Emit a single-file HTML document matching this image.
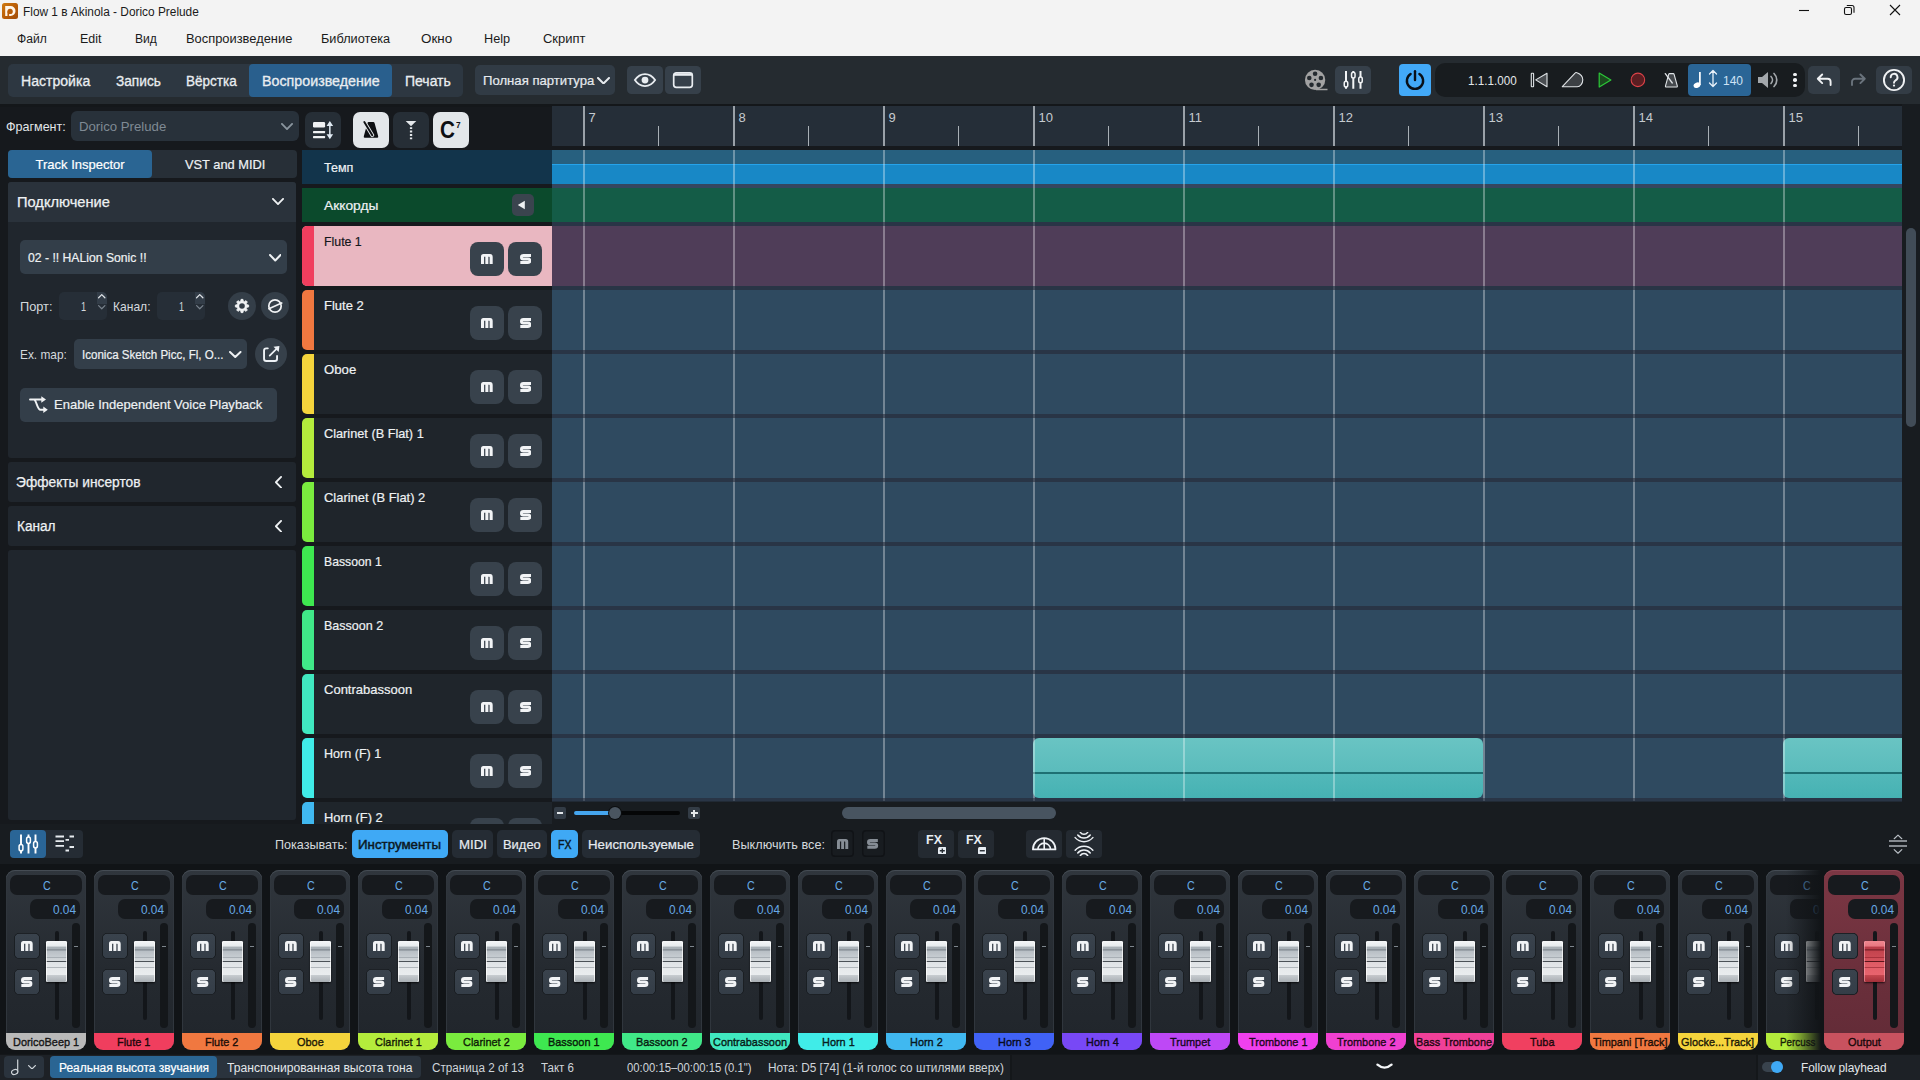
<!DOCTYPE html><html><head><meta charset="utf-8"><title>Dorico</title><style>
*{box-sizing:border-box;margin:0;padding:0}
html,body{width:1920px;height:1080px;overflow:hidden;background:#16191d;font-family:"Liberation Sans",sans-serif;color:#e8ecef;font-size:13px}
.a{position:absolute}
.t{position:absolute;white-space:nowrap;line-height:1;transform-origin:0 0}
.ms{position:absolute;width:34px;height:34px;border-radius:8px;background:#38424c}
.trk{position:absolute;left:302px;width:250px;height:60px;background:#1f252b;border-radius:5px 0 0 5px;overflow:hidden}
.trk i{position:absolute;left:0;top:0;width:12px;height:60px}
.lane{position:absolute;left:552px;width:1350px;height:60px;background:#2f4a60}
.strip{position:absolute;top:870px;width:80px;height:180px;border-radius:9px;background:linear-gradient(#30363d,#252a30 55%,#20252b);overflow:hidden;box-shadow:inset 0 1px 0 #454c54,inset 1px 0 0 #30363d,inset -1px 0 0 #30363d}
.pan{position:absolute;left:4px;top:5px;width:72px;height:20px;border-radius:7px;background:#171a1e}
.val{position:absolute;left:24px;top:29px;width:50px;height:20px;border-radius:7px;background:#171a1e}
.mb{position:absolute;left:7.500px;width:26.800px;height:26.800px;border-radius:5px;background:linear-gradient(#3a434d,#343d47);box-shadow:inset 0 0 0 .800px #14171a}
.ftrk{position:absolute;left:49px;top:61px;width:4px;height:89px;border-radius:2px;background:#13161a}
.fcap{position:absolute;left:40px;top:71px;width:21px;height:41px;border-radius:1.500px;background:linear-gradient(#f4f6f7 0%,#e6eaed 13%,#a9b1b7 14%,#aab2b8 20%,#8b939a 20.5%,#8b939a 23%,#b7bec4 23.5%,#c6ccd1 39%,#a8afb5 39.5%,#a8afb5 41.5%,#cdd2d6 42%,#d3d8db 48.5%,#4b5157 49%,#4b5157 51.5%,#dfe3e6 52%,#e3e6e9 64%,#b1b7bc 64.5%,#b1b7bc 66%,#e6e9eb 66.5%,#eaedef 83%,#c6cbcf 84%,#a9afb4 100%);box-shadow:0 1px 2px rgba(0,0,0,.7),inset 1px 0 0 rgba(255,255,255,.7),inset -1px 0 0 rgba(255,255,255,.7)}
.meter{position:absolute;left:66px;top:53px;width:8px;height:105px;border-radius:4px;background:#14171a}
.dash{position:absolute;left:68px;top:76px;width:4px;height:1px;background:#7d858c}
.lbl{position:absolute;left:0;top:163px;width:80px;height:17px}
</style></head><body>
<div class="a" style="left:0px;top:0px;width:1920px;height:56px;background:#f3f3f3;"></div>
<div class="a" style="left:2px;top:3px;width:16px;height:16px;background:linear-gradient(135deg,#d07a10,#b85c08 55%,#a04c08);border-radius:2.5px;"></div>
<svg class="a" style="left:2px;top:3px" width="16" height="16" viewBox="0 0 16 16" ><path d="M3.200 3h5.300a5 5 0 0 1 0 10H3.200z" fill="#fff6ea"/><circle cx="8.100" cy="8.400" r="2.650" fill="#b85c08"/><rect x="5.450" y="8.400" width="1.700" height="5" fill="#b85c08"/></svg>
<div class="t" style="left:23.30px;top:6.00px;font-size:12px;color:#1a1a1a;transform:scaleX(0.989);">Flow 1 в Akinola - Dorico Prelude</div>
<div class="t" style="left:16.60px;top:33.00px;font-size:12px;color:#1a1a1a;transform:scaleX(1.009);">Файл</div>
<div class="t" style="left:79.80px;top:33.00px;font-size:12px;color:#1a1a1a;transform:scaleX(1.034);">Edit</div>
<div class="t" style="left:134.50px;top:33.00px;font-size:12px;color:#1a1a1a;transform:scaleX(1.008);">Вид</div>
<div class="t" style="left:186.30px;top:33.00px;font-size:12px;color:#1a1a1a;transform:scaleX(1.073);">Воспроизведение</div>
<div class="t" style="left:320.80px;top:33.00px;font-size:12px;color:#1a1a1a;transform:scaleX(1.060);">Библиотека</div>
<div class="t" style="left:420.80px;top:33.00px;font-size:12px;color:#1a1a1a;transform:scaleX(1.118);">Окно</div>
<div class="t" style="left:484.20px;top:33.00px;font-size:12px;color:#1a1a1a;transform:scaleX(1.058);">Help</div>
<div class="t" style="left:542.50px;top:33.00px;font-size:12px;color:#1a1a1a;transform:scaleX(1.081);">Скрипт</div>
<svg class="a" style="left:1790px;top:0px" width="130" height="22" viewBox="0 0 130 22" fill="none" stroke="#111" stroke-width="1.100"><path d="M9 10.500h10"/><rect x="54.500" y="7.500" width="7" height="7" rx="1.600"/><path d="M56.800 5.500h5.200a2 2 0 0 1 2 2v5.200"/><path d="M100 5l10 10m0-10l-10 10"/></svg>
<div class="a" style="left:0px;top:56px;width:1920px;height:48px;background:#252b30;"></div>
<div class="a" style="left:0px;top:104px;width:1920px;height:3px;background:#14171a;"></div>
<div class="a" style="left:8px;top:64px;width:455px;height:33px;background:#2d3741;border-radius:5px;"></div>
<div class="a" style="left:249px;top:64px;width:143px;height:33px;background:#295f8d;border-radius:4px;"></div>
<div class="t" style="left:20.80px;top:74.00px;font-size:14px;color:#e9edf0;transform:scaleX(1.004);-webkit-text-stroke:.3px #e9edf0;">Настройка</div>
<div class="t" style="left:115.50px;top:74.00px;font-size:14px;color:#e9edf0;transform:scaleX(0.976);-webkit-text-stroke:.3px #e9edf0;">Запись</div>
<div class="t" style="left:185.50px;top:74.00px;font-size:14px;color:#e9edf0;transform:scaleX(0.966);-webkit-text-stroke:.3px #e9edf0;">Вёрстка</div>
<div class="t" style="left:261.70px;top:74.00px;font-size:14px;color:#e9edf0;transform:scaleX(1.019);-webkit-text-stroke:.3px #e9edf0;">Воспроизведение</div>
<div class="t" style="left:404.70px;top:74.00px;font-size:14px;color:#e9edf0;transform:scaleX(0.999);-webkit-text-stroke:.3px #e9edf0;">Печать</div>
<div class="a" style="left:475px;top:65px;width:140px;height:30px;background:#313b45;border-radius:5px;"></div>
<div class="t" style="left:483.30px;top:74.00px;font-size:13px;color:#e6eaee;transform:scaleX(1.010);-webkit-text-stroke:.2px #e6eaee;">Полная партитура</div>
<svg class="a" style="left:596.5px;top:76.5px" width="13" height="7.5" viewBox="0 0 13 7.5" ><path d="M1.0 1.0L6.5 6.5L12.0 1.0" fill="none" stroke="#e6eaee" stroke-width="2" stroke-linecap="round" stroke-linejoin="round"/></svg>
<div class="a" style="left:627px;top:66px;width:36px;height:28px;background:#36404a;border-radius:4.5px;"></div>
<div class="a" style="left:665px;top:66px;width:36px;height:28px;background:#36404a;border-radius:4.5px;"></div>
<svg class="a" style="left:633px;top:72px" width="24" height="16" viewBox="0 0 24 16" fill="none" stroke="#e9edf1" stroke-width="1.800"><path d="M1.900 8.100c2.800-4.300 6-6 10.100-6s7.300 1.700 10.100 6c-2.800 4.300-6 6-10.100 6s-7.300-1.700-10.100-6z"/><circle cx="12" cy="8.100" r="3.400" fill="#e9edf1" stroke="none"/></svg>
<svg class="a" style="left:672px;top:71px" width="22" height="18" viewBox="0 0 22 18" fill="none" stroke="#e9edf1" stroke-width="1.700"><rect x="1.700" y="1.800" width="18.600" height="14.600" rx="2.600"/><path d="M1.700 3.600h18.600" stroke-width="2.400"/></svg>
<svg class="a" style="left:1304px;top:69px" width="24" height="22" viewBox="0 0 24 22" ><circle cx="11.100" cy="10.900" r="10.150" fill="#a2a2a2"/><circle cx="11.100" cy="10.900" r="1.100" fill="#252b30"/><circle cx="11.10" cy="4.80" r="2.300" fill="#252b30"/><circle cx="16.90" cy="9.01" r="2.300" fill="#252b30"/><circle cx="14.69" cy="15.84" r="2.300" fill="#252b30"/><circle cx="7.51" cy="15.84" r="2.300" fill="#252b30"/><circle cx="5.30" cy="9.01" r="2.300" fill="#252b30"/><path d="M12 20.500h11.500" stroke="#a2a2a2" stroke-width="1.500"/></svg>
<div class="a" style="left:1335px;top:66px;width:36px;height:28px;background:#36404a;border-radius:5px;"></div>
<svg class="a" style="left:1342px;top:70px" width="22" height="20" viewBox="0 0 22 20" ><path d="M4 0.900v17.900M11.300 0.900v17.900M18.500 0.900v17.900" stroke="#f2f4f6" stroke-width="2"/><rect x="2.250" y="11.300" width="3.500" height="5.800" rx="1.750" fill="#38414b" stroke="#f2f4f6" stroke-width="1.500"/><rect x="9.550" y="2.300" width="3.500" height="5.800" rx="1.750" fill="#38414b" stroke="#f2f4f6" stroke-width="1.500"/><rect x="16.750" y="7" width="3.500" height="5.800" rx="1.750" fill="#38414b" stroke="#f2f4f6" stroke-width="1.500"/></svg>
<div class="a" style="left:1399px;top:64px;width:32px;height:32px;background:#42a9f8;border-radius:4px;"></div>
<svg class="a" style="left:1404px;top:69px" width="22" height="22" viewBox="0 0 22 22" ><path d="M6.600 5a8.100 8.100 0 1 0 8.800 0" fill="none" stroke="#091018" stroke-width="2.400" stroke-linecap="round"/><path d="M11 2.300v8.700" stroke="#091018" stroke-width="2.400" stroke-linecap="round"/></svg>
<div class="a" style="left:1435px;top:63px;width:370px;height:34px;background:#181c1f;border-radius:10px;"></div>
<div class="t" style="left:1468.00px;top:75.00px;font-size:12px;color:#e3e7ea;transform:scaleX(0.973);">1.1.1.000</div>
<svg class="a" style="left:1529px;top:71px" width="20" height="18" viewBox="0 0 20 18" ><rect x="2.300" y="2.300" width="2.300" height="13.500" rx="0.500" fill="#181c1f" stroke="#dfe3e6" stroke-width="1.100"/><path d="M18 2.300v13.500L6.700 8.900z" fill="#4a4e52" stroke="#dfe3e6" stroke-width="1.100" stroke-linejoin="round"/></svg>
<svg class="a" style="left:1561px;top:71px" width="24" height="18" viewBox="0 0 24 18" ><path d="M1.300 15.700L14.300 1.800C14.600 1.300 15.300 1.400 16 1.700C19.500 3 21.800 5.500 21.800 8.700C21.800 12.300 19.300 15.700 16.200 15.700z" fill="#3c4044" stroke="#dfe3e6" stroke-width="1.100" stroke-linejoin="round"/></svg>
<svg class="a" style="left:1597px;top:71px" width="16" height="18" viewBox="0 0 16 18" ><path d="M2.200 2.100L13.900 8.900L2.200 16z" fill="#1b4a1e" stroke="#2cc738" stroke-width="1.200" stroke-linejoin="round"/></svg>
<svg class="a" style="left:1629px;top:71px" width="18" height="18" viewBox="0 0 18 18" ><circle cx="8.900" cy="8.900" r="6.750" fill="#5a1e22" stroke="#dc4248" stroke-width="1.100"/></svg>
<svg class="a" style="left:1663px;top:71px" width="16" height="18" viewBox="0 0 16 18" ><path d="M6.600 2.600h3.600q.700 0 .900.700l3.200 11.600q.300 1.100-.800 1.100h-10.200q-1.100 0-.800-1.100l3.200-11.600q.200-.700.900-.700z" fill="#45494d" stroke="#dfe3e6" stroke-width="1.100" stroke-linejoin="round"/><path d="M2.300 2.600L9.300 12" stroke="#dfe3e6" stroke-width="1.300" stroke-linecap="round"/></svg>
<div class="a" style="left:1688px;top:64px;width:63px;height:32px;background:#2a6596;border-radius:4px;"></div>
<svg class="a" style="left:1693px;top:71px" width="11" height="18" viewBox="0 0 11 18" ><ellipse cx="4" cy="14.200" rx="3.500" ry="2.700" fill="#fff" transform="rotate(-20 4 14.200)"/><path d="M6.900 14V1" stroke="#fff" stroke-width="1.700"/></svg>
<svg class="a" style="left:1708px;top:69px" width="10" height="19" viewBox="0 0 10 19" ><path d="M5 2v15M1.500 5L5 1.500L8.500 5M1.500 14L5 17.500L8.500 14" fill="none" stroke="#e8f1f9" stroke-width="1.300" stroke-linecap="round" stroke-linejoin="round"/></svg>
<div class="t" style="left:1723.00px;top:75.00px;font-size:12px;color:#cfe3f5;transform:scaleX(0.998);">140</div>
<svg class="a" style="left:1757px;top:71px" width="22" height="18" viewBox="0 0 22 18" ><path d="M1 6h4l6-5v16l-6-5H1z" fill="#a3a7ab"/><path d="M14 5.500a5 5 0 0 1 0 7M17 2.500a9 9 0 0 1 0 13" fill="none" stroke="#a3a7ab" stroke-width="1.700" stroke-linecap="round"/></svg>
<div class="a" style="left:1793.2px;top:72.9px;width:3.6px;height:3.6px;background:#f0f2f4;border-radius:1.8px;"></div>
<div class="a" style="left:1793.2px;top:78.4px;width:3.6px;height:3.6px;background:#f0f2f4;border-radius:1.8px;"></div>
<div class="a" style="left:1793.2px;top:83.9px;width:3.6px;height:3.6px;background:#f0f2f4;border-radius:1.8px;"></div>
<div class="a" style="left:1808px;top:66px;width:32px;height:28px;background:#333c45;border-radius:5px;"></div>
<svg class="a" style="left:1816px;top:73px" width="17" height="14" viewBox="0 0 17 14" ><path d="M6.200 1.500L1.800 5.800l4.400 4.300M1.800 5.800h9.800a3 3 0 0 1 3 3v3.200" fill="none" stroke="#f0f2f4" stroke-width="1.900" stroke-linecap="round" stroke-linejoin="round"/></svg>
<svg class="a" style="left:1850px;top:73px" width="17" height="14" viewBox="0 0 17 14" ><path d="M10.400 1.500L14.800 5.800l-4.400 4.300M14.800 5.800H5a3 3 0 0 0-3 3v3.200" fill="none" stroke="#6a737c" stroke-width="1.900" stroke-linecap="round" stroke-linejoin="round"/></svg>
<div class="a" style="left:1876px;top:66px;width:36px;height:28px;background:#333c45;border-radius:5px;"></div>
<svg class="a" style="left:1882px;top:68px" width="24" height="24" viewBox="0 0 24 24" ><circle cx="12" cy="12" r="10.100" fill="none" stroke="#f0f2f4" stroke-width="1.900"/><path d="M8.700 9.300a3.400 3.400 0 1 1 4.900 3c-1.100.600-1.600 1.200-1.600 2.500" fill="none" stroke="#f0f2f4" stroke-width="1.900" stroke-linecap="round"/><circle cx="12" cy="17.600" r="1.100" fill="#f0f2f4"/></svg>
<div class="t" style="left:5.50px;top:120.00px;font-size:13px;color:#e3e7ea;transform:scaleX(0.964);">Фрагмент:</div>
<div class="a" style="left:71px;top:111px;width:228px;height:30px;background:#28313a;border-radius:6px;"></div>
<div class="t" style="left:79.00px;top:120.00px;font-size:13px;color:#7f8a94;transform:scaleX(1.015);">Dorico Prelude</div>
<svg class="a" style="left:281px;top:122.5px" width="12" height="7" viewBox="0 0 12 7" ><path d="M0.9 0.9L6.0 6.1L11.1 0.9" fill="none" stroke="#8a959e" stroke-width="1.8" stroke-linecap="round" stroke-linejoin="round"/></svg>
<div class="a" style="left:8px;top:150px;width:289px;height:28px;background:#272f37;border-radius:4px;"></div>
<div class="a" style="left:8px;top:150px;width:144px;height:28px;background:#2a6593;border-radius:4px;"></div>
<div class="t" style="left:35.50px;top:158.00px;font-size:13px;color:#fff;transform:scaleX(1.000);-webkit-text-stroke:.2px #fff;">Track Inspector</div>
<div class="t" style="left:185.00px;top:158.00px;font-size:13px;color:#eef1f3;transform:scaleX(0.987);-webkit-text-stroke:.2px #eef1f3;">VST and MIDI</div>
<div class="a" style="left:8px;top:182px;width:288px;height:276px;background:#20262d;border-radius:3px;"></div>
<div class="a" style="left:8px;top:182px;width:288px;height:40px;background:#2a323b;border-radius:3px 3px 0 0;"></div>
<div class="t" style="left:16.50px;top:195.00px;font-size:14px;color:#eef1f3;transform:scaleX(1.046);-webkit-text-stroke:.25px #eef1f3;">Подключение</div>
<svg class="a" style="left:272px;top:198px" width="12" height="7" viewBox="0 0 12 7" ><path d="M0.9 0.9L6.0 6.1L11.1 0.9" fill="none" stroke="#eef1f3" stroke-width="1.8" stroke-linecap="round" stroke-linejoin="round"/></svg>
<div class="a" style="left:20px;top:240px;width:267px;height:34px;background:#333e49;border-radius:5px;"></div>
<div class="t" style="left:28.00px;top:252.00px;font-size:12.5px;color:#eef1f3;transform:scaleX(0.975);-webkit-text-stroke:.2px #eef1f3;">02 - !! HALion Sonic !!</div>
<svg class="a" style="left:268.5px;top:254px" width="12.5" height="7.5" viewBox="0 0 12.5 7.5" ><path d="M1.0 1.0L6.25 6.5L11.5 1.0" fill="none" stroke="#eef1f3" stroke-width="2" stroke-linecap="round" stroke-linejoin="round"/></svg>
<div class="t" style="left:20.30px;top:300.00px;font-size:13px;color:#d4d9dd;transform:scaleX(0.982);">Порт:</div>
<div class="a" style="left:59px;top:292px;width:48px;height:28px;background:#262e37;border-radius:5px;"></div>
<div class="a" style="left:96.5px;top:292px;width:10.5px;height:12px;background:#333d48;border-radius:0 5px 0 0;"></div>
<div class="t" style="left:80.50px;top:300.00px;font-size:13px;color:#d4d9dd;transform:scaleX(0.707);">1</div>
<svg class="a" style="left:98.3px;top:294.4px" width="7.5" height="4.4" viewBox="0 0 7.5 4.4" ><path d="M0.6 3.8000000000000003L3.75 0.6L6.9 3.8000000000000003" fill="none" stroke="#e0e4e8" stroke-width="1.2" stroke-linecap="round" stroke-linejoin="round"/></svg>
<svg class="a" style="left:98.3px;top:305.2px" width="7.5" height="4.4" viewBox="0 0 7.5 4.4" ><path d="M0.6 0.6L3.75 3.8000000000000003L6.9 0.6" fill="none" stroke="#78828c" stroke-width="1.2" stroke-linecap="round" stroke-linejoin="round"/></svg>
<div class="t" style="left:113.30px;top:300.00px;font-size:13px;color:#d4d9dd;transform:scaleX(0.928);">Канал:</div>
<div class="a" style="left:157px;top:292px;width:48px;height:28px;background:#262e37;border-radius:5px;"></div>
<div class="a" style="left:194.5px;top:292px;width:10.5px;height:12px;background:#333d48;border-radius:0 5px 0 0;"></div>
<div class="t" style="left:178.60px;top:300.00px;font-size:13px;color:#d4d9dd;transform:scaleX(0.693);">1</div>
<svg class="a" style="left:196.3px;top:294.4px" width="7.5" height="4.4" viewBox="0 0 7.5 4.4" ><path d="M0.6 3.8000000000000003L3.75 0.6L6.9 3.8000000000000003" fill="none" stroke="#e0e4e8" stroke-width="1.2" stroke-linecap="round" stroke-linejoin="round"/></svg>
<svg class="a" style="left:196.3px;top:305.2px" width="7.5" height="4.4" viewBox="0 0 7.5 4.4" ><path d="M0.6 0.6L3.75 3.8000000000000003L6.9 0.6" fill="none" stroke="#78828c" stroke-width="1.2" stroke-linecap="round" stroke-linejoin="round"/></svg>
<div class="a" style="left:228px;top:292px;width:28px;height:28px;background:#343e48;border-radius:14px;"></div>
<div class="a" style="left:261px;top:292px;width:28px;height:28px;background:#343e48;border-radius:14px;"></div>
<svg class="a" style="left:232px;top:296px" width="20" height="20" viewBox="0 0 20 20" ><path d="M14.96 8.81L16.63 9.00L16.63 11.00L14.96 11.19L14.35 12.66L15.39 13.98L13.98 15.39L12.66 14.35L11.19 14.96L11.00 16.63L9.00 16.63L8.81 14.96L7.34 14.35L6.02 15.39L4.61 13.98L5.65 12.66L5.04 11.19L3.37 11.00L3.37 9.00L5.04 8.81L5.65 7.34L4.61 6.02L6.02 4.61L7.34 5.65L8.81 5.04L9.00 3.37L11.00 3.37L11.19 5.04L12.66 5.65L13.98 4.61L15.39 6.02L14.35 7.34Z" fill="#f0f2f4" stroke="#f0f2f4" stroke-width="0.800" stroke-linejoin="round"/><circle cx="10" cy="10" r="2.8" fill="#343e48"/></svg>
<svg class="a" style="left:265px;top:296px" width="20" height="20" viewBox="0 0 20 20" ><circle cx="10" cy="10" r="6.200" fill="none" stroke="#f0f2f4" stroke-width="1.700"/><path d="M3.900 12.700L16.700 7" stroke="#f0f2f4" stroke-width="1.700" stroke-linecap="round"/></svg>
<div class="t" style="left:20.30px;top:348.00px;font-size:13px;color:#d4d9dd;transform:scaleX(0.914);">Ex. map:</div>
<div class="a" style="left:74px;top:339px;width:173px;height:30px;background:#333e49;border-radius:5px;"></div>
<div class="t" style="left:82.30px;top:349.00px;font-size:12.5px;color:#eef1f3;transform:scaleX(0.925);-webkit-text-stroke:.2px #eef1f3;">Iconica Sketch Picc, Fl, O...</div>
<svg class="a" style="left:229px;top:351px" width="12.5" height="7" viewBox="0 0 12.5 7" ><path d="M1.0 1.0L6.25 6.0L11.5 1.0" fill="none" stroke="#eef1f3" stroke-width="2" stroke-linecap="round" stroke-linejoin="round"/></svg>
<div class="a" style="left:255.4px;top:338.2px;width:31.4px;height:31.6px;background:#36404a;border-radius:16px;"></div>
<svg class="a" style="left:261px;top:344px" width="20" height="20" viewBox="0 0 20 20" ><path d="M6.800 4.350H5.300a2.250 2.250 0 0 0-2.250 2.250v8.200a2.250 2.250 0 0 0 2.250 2.250h8.500a2.250 2.250 0 0 0 2.250-2.250V12" fill="none" stroke="#eef2f6" stroke-width="1.900" stroke-linecap="round"/><path d="M8.700 11.700L15.500 4.900" stroke="#eef2f6" stroke-width="1.700" stroke-linecap="round"/><path d="M18.400 2L12.500 2.700L17.700 7.900z" fill="#eef2f6"/></svg>
<div class="a" style="left:20px;top:388px;width:257px;height:34px;background:#333e49;border-radius:5px;"></div>
<svg class="a" style="left:29px;top:396px" width="19" height="18" viewBox="0 0 19 18" ><path d="M1 3.500h12M4.800 3.500c2.700 0 3.200 10.300 6.700 10.300h4" fill="none" stroke="#f0f2f4" stroke-width="1.900" stroke-linecap="round" stroke-linejoin="round"/><path d="M12.300 0.300l4.700 3.200l-4.700 3.200zM14.300 10.600l4.500 3.200l-4.500 3.200z" fill="#f0f2f4"/></svg>
<div class="t" style="left:54.40px;top:398.00px;font-size:13px;color:#eef1f3;transform:scaleX(1.001);-webkit-text-stroke:.2px #eef1f3;">Enable Independent Voice Playback</div>
<div class="a" style="left:8px;top:462px;width:288px;height:40px;background:#20262d;border-radius:3px;"></div>
<div class="t" style="left:16.30px;top:475.00px;font-size:14px;color:#eef1f3;transform:scaleX(0.982);-webkit-text-stroke:.25px #eef1f3;">Эффекты инсертов</div>
<svg class="a" style="left:274.5px;top:475.5px" width="7" height="12.5" viewBox="0 0 7 12.5" ><path d="M6.1 0.9L0.9 6.25L6.1 11.6" fill="none" stroke="#eef1f3" stroke-width="1.8" stroke-linecap="round" stroke-linejoin="round"/></svg>
<div class="a" style="left:8px;top:506px;width:288px;height:40px;background:#20262d;border-radius:3px;"></div>
<div class="t" style="left:16.50px;top:519.00px;font-size:14px;color:#eef1f3;transform:scaleX(0.972);-webkit-text-stroke:.25px #eef1f3;">Канал</div>
<svg class="a" style="left:274.5px;top:519.5px" width="7" height="12.5" viewBox="0 0 7 12.5" ><path d="M6.1 0.9L0.9 6.25L6.1 11.6" fill="none" stroke="#eef1f3" stroke-width="1.8" stroke-linecap="round" stroke-linejoin="round"/></svg>
<div class="a" style="left:8px;top:550px;width:288px;height:270px;background:#20262d;border-radius:3px;"></div>
<div class="a" style="left:305px;top:112px;width:36px;height:36px;background:#262e36;border-radius:7px;"></div>
<svg class="a" style="left:312px;top:120px" width="24" height="20" viewBox="0 0 24 20" ><rect x="1" y="2" width="12.100" height="5.500" rx="1.200" fill="#f0f2f4"/><rect x="1" y="11" width="12.100" height="2.200" rx="0.600" fill="#f0f2f4"/><rect x="1" y="16" width="12.100" height="2.200" rx="0.600" fill="#f0f2f4"/><path d="M17.850 4v12" stroke="#dfe9f2" stroke-width="1.500"/><path d="M17.850 0.900l3.300 5h-6.600zM17.850 19.300l3.300-5h-6.600z" fill="#dfe9f2"/></svg>
<div class="a" style="left:353px;top:112px;width:36px;height:36px;background:#e3e7ea;border-radius:7px;"></div>
<svg class="a" style="left:362px;top:120px" width="18" height="20" viewBox="0 0 18 20" ><path d="M7.700 2h3.600q1 0 1.250 1l3.650 13.300q.350 1.500-1.100 1.500h-12.200q-1.450 0-1.100-1.500l3.650-13.300q.250-1 1.250-1z" fill="#0e1013"/><path d="M2.600 2.600L10.300 15.200" stroke="#e3e7ea" stroke-width="3.800" stroke-linecap="round"/><path d="M2.300 2.100L10.300 15.200" stroke="#0e1013" stroke-width="1.900" stroke-linecap="round"/></svg>
<div class="a" style="left:393px;top:112px;width:36px;height:36px;background:#262e36;border-radius:7px;"></div>
<svg class="a" style="left:402px;top:120px" width="18" height="20" viewBox="0 0 18 20" ><path d="M3.700 1.100h10.600l-5.300 5.200z" fill="#e3e7ea"/><path d="M9.050 6v13.200" stroke="#e3e7ea" stroke-width="2.300" stroke-dasharray="1.900 1.500" stroke-dashoffset="-1.200"/></svg>
<div class="a" style="left:433px;top:112px;width:36px;height:36px;background:#e3e7ea;border-radius:7px;"></div>
<div class="t" style="left:440.30px;top:119.00px;font-size:23px;color:#0e1013;font-weight:bold;transform:scaleX(0.900);">C</div>
<div class="t" style="left:456.20px;top:121.00px;font-size:8.5px;color:#0e1013;font-weight:bold;transform:scaleX(0.975);">7</div>
<div class="a" style="left:302px;top:150px;width:250px;height:34px;background:#12344b;"></div>
<div class="t" style="left:324.00px;top:161.00px;font-size:13px;color:#eef1f3;transform:scaleX(0.963);-webkit-text-stroke:.2px #eef1f3;">Темп</div>
<div class="a" style="left:302px;top:188px;width:250px;height:34px;background:#0b4a2c;"></div>
<div class="t" style="left:324.00px;top:199.00px;font-size:13px;color:#eef1f3;transform:scaleX(1.059);-webkit-text-stroke:.2px #eef1f3;">Аккорды</div>
<div class="a" style="left:512px;top:194px;width:22px;height:22px;background:#3a444e;border-radius:5px;"></div>
<svg class="a" style="left:512px;top:194px" width="22" height="22" viewBox="0 0 22 22" ><path d="M5.800 11l7-4.300v8.600z" fill="#eef1f3"/></svg>
<div class="trk" style="top:226px;background:#e9b7c1"><i style="background:#f03e5e"></i></div>
<div class="t" style="left:324.00px;top:235.00px;font-size:13px;color:#15181c;transform:scaleX(0.949);-webkit-text-stroke:.2px #15181c;">Flute 1</div>
<div class="ms" style="left:470px;top:242px"></div><div class="ms" style="left:508px;top:242px"></div>
<svg class="a" style="left:481.35px;top:253.6px" width="11.7" height="10.4" viewBox="0 0 12 9" preserveAspectRatio="none"><path d="M0 9V2.4Q0 0 2.4 0H9.4Q12 0 12 2.6V9H8.85V2.9Q8.85 2.35 8.4 2.35H7.55V9H4.45V2.35H3.15V9Z" fill="#f2f4f6"/></svg>
<svg class="a" style="left:519.6px;top:254.1px" width="11.4" height="10.0" viewBox="0 0 11 9" preserveAspectRatio="none"><path d="M10.7 1.35H3.3Q1.35 1.35 1.35 2.95Q1.35 4.5 3.3 4.5H7.7Q9.65 4.5 9.65 6.05Q9.65 7.65 7.7 7.65H0.3" fill="none" stroke="#f2f4f6" stroke-width="2.7"/></svg>
<div class="trk" style="top:290px;background:#1f252b"><i style="background:#f07840"></i></div>
<div class="t" style="left:324.00px;top:299.00px;font-size:13px;color:#eef1f3;transform:scaleX(1.000);-webkit-text-stroke:.2px #eef1f3;">Flute 2</div>
<div class="ms" style="left:470px;top:306px"></div><div class="ms" style="left:508px;top:306px"></div>
<svg class="a" style="left:481.35px;top:317.6px" width="11.7" height="10.4" viewBox="0 0 12 9" preserveAspectRatio="none"><path d="M0 9V2.4Q0 0 2.4 0H9.4Q12 0 12 2.6V9H8.85V2.9Q8.85 2.35 8.4 2.35H7.55V9H4.45V2.35H3.15V9Z" fill="#f2f4f6"/></svg>
<svg class="a" style="left:519.6px;top:318.1px" width="11.4" height="10.0" viewBox="0 0 11 9" preserveAspectRatio="none"><path d="M10.7 1.35H3.3Q1.35 1.35 1.35 2.95Q1.35 4.5 3.3 4.5H7.7Q9.65 4.5 9.65 6.05Q9.65 7.65 7.7 7.65H0.3" fill="none" stroke="#f2f4f6" stroke-width="2.7"/></svg>
<div class="trk" style="top:354px;background:#1f252b"><i style="background:#f5d43c"></i></div>
<div class="t" style="left:324.00px;top:363.00px;font-size:13px;color:#eef1f3;transform:scaleX(1.013);-webkit-text-stroke:.2px #eef1f3;">Oboe</div>
<div class="ms" style="left:470px;top:370px"></div><div class="ms" style="left:508px;top:370px"></div>
<svg class="a" style="left:481.35px;top:381.6px" width="11.7" height="10.4" viewBox="0 0 12 9" preserveAspectRatio="none"><path d="M0 9V2.4Q0 0 2.4 0H9.4Q12 0 12 2.6V9H8.85V2.9Q8.85 2.35 8.4 2.35H7.55V9H4.45V2.35H3.15V9Z" fill="#f2f4f6"/></svg>
<svg class="a" style="left:519.6px;top:382.1px" width="11.4" height="10.0" viewBox="0 0 11 9" preserveAspectRatio="none"><path d="M10.7 1.35H3.3Q1.35 1.35 1.35 2.95Q1.35 4.5 3.3 4.5H7.7Q9.65 4.5 9.65 6.05Q9.65 7.65 7.7 7.65H0.3" fill="none" stroke="#f2f4f6" stroke-width="2.7"/></svg>
<div class="trk" style="top:418px;background:#1f252b"><i style="background:#b4ec3c"></i></div>
<div class="t" style="left:324.00px;top:427.00px;font-size:13px;color:#eef1f3;transform:scaleX(0.979);-webkit-text-stroke:.2px #eef1f3;">Clarinet (B Flat) 1</div>
<div class="ms" style="left:470px;top:434px"></div><div class="ms" style="left:508px;top:434px"></div>
<svg class="a" style="left:481.35px;top:445.6px" width="11.7" height="10.4" viewBox="0 0 12 9" preserveAspectRatio="none"><path d="M0 9V2.4Q0 0 2.4 0H9.4Q12 0 12 2.6V9H8.85V2.9Q8.85 2.35 8.4 2.35H7.55V9H4.45V2.35H3.15V9Z" fill="#f2f4f6"/></svg>
<svg class="a" style="left:519.6px;top:446.1px" width="11.4" height="10.0" viewBox="0 0 11 9" preserveAspectRatio="none"><path d="M10.7 1.35H3.3Q1.35 1.35 1.35 2.95Q1.35 4.5 3.3 4.5H7.7Q9.65 4.5 9.65 6.05Q9.65 7.65 7.7 7.65H0.3" fill="none" stroke="#f2f4f6" stroke-width="2.7"/></svg>
<div class="trk" style="top:482px;background:#1f252b"><i style="background:#7aec3e"></i></div>
<div class="t" style="left:324.00px;top:491.00px;font-size:13px;color:#eef1f3;transform:scaleX(0.994);-webkit-text-stroke:.2px #eef1f3;">Clarinet (B Flat) 2</div>
<div class="ms" style="left:470px;top:498px"></div><div class="ms" style="left:508px;top:498px"></div>
<svg class="a" style="left:481.35px;top:509.6px" width="11.7" height="10.4" viewBox="0 0 12 9" preserveAspectRatio="none"><path d="M0 9V2.4Q0 0 2.4 0H9.4Q12 0 12 2.6V9H8.85V2.9Q8.85 2.35 8.4 2.35H7.55V9H4.45V2.35H3.15V9Z" fill="#f2f4f6"/></svg>
<svg class="a" style="left:519.6px;top:510.1px" width="11.4" height="10.0" viewBox="0 0 11 9" preserveAspectRatio="none"><path d="M10.7 1.35H3.3Q1.35 1.35 1.35 2.95Q1.35 4.5 3.3 4.5H7.7Q9.65 4.5 9.65 6.05Q9.65 7.65 7.7 7.65H0.3" fill="none" stroke="#f2f4f6" stroke-width="2.7"/></svg>
<div class="trk" style="top:546px;background:#1f252b"><i style="background:#3ee850"></i></div>
<div class="t" style="left:324.00px;top:555.00px;font-size:13px;color:#eef1f3;transform:scaleX(0.939);-webkit-text-stroke:.2px #eef1f3;">Bassoon 1</div>
<div class="ms" style="left:470px;top:562px"></div><div class="ms" style="left:508px;top:562px"></div>
<svg class="a" style="left:481.35px;top:573.6px" width="11.7" height="10.4" viewBox="0 0 12 9" preserveAspectRatio="none"><path d="M0 9V2.4Q0 0 2.4 0H9.4Q12 0 12 2.6V9H8.85V2.9Q8.85 2.35 8.4 2.35H7.55V9H4.45V2.35H3.15V9Z" fill="#f2f4f6"/></svg>
<svg class="a" style="left:519.6px;top:574.1px" width="11.4" height="10.0" viewBox="0 0 11 9" preserveAspectRatio="none"><path d="M10.7 1.35H3.3Q1.35 1.35 1.35 2.95Q1.35 4.5 3.3 4.5H7.7Q9.65 4.5 9.65 6.05Q9.65 7.65 7.7 7.65H0.3" fill="none" stroke="#f2f4f6" stroke-width="2.7"/></svg>
<div class="trk" style="top:610px;background:#1f252b"><i style="background:#40e888"></i></div>
<div class="t" style="left:324.00px;top:619.00px;font-size:13px;color:#eef1f3;transform:scaleX(0.964);-webkit-text-stroke:.2px #eef1f3;">Bassoon 2</div>
<div class="ms" style="left:470px;top:626px"></div><div class="ms" style="left:508px;top:626px"></div>
<svg class="a" style="left:481.35px;top:637.6px" width="11.7" height="10.4" viewBox="0 0 12 9" preserveAspectRatio="none"><path d="M0 9V2.4Q0 0 2.4 0H9.4Q12 0 12 2.6V9H8.85V2.9Q8.85 2.35 8.4 2.35H7.55V9H4.45V2.35H3.15V9Z" fill="#f2f4f6"/></svg>
<svg class="a" style="left:519.6px;top:638.1px" width="11.4" height="10.0" viewBox="0 0 11 9" preserveAspectRatio="none"><path d="M10.7 1.35H3.3Q1.35 1.35 1.35 2.95Q1.35 4.5 3.3 4.5H7.7Q9.65 4.5 9.65 6.05Q9.65 7.65 7.7 7.65H0.3" fill="none" stroke="#f2f4f6" stroke-width="2.7"/></svg>
<div class="trk" style="top:674px;background:#1f252b"><i style="background:#40e8c0"></i></div>
<div class="t" style="left:324.00px;top:683.00px;font-size:13px;color:#eef1f3;transform:scaleX(1.001);-webkit-text-stroke:.2px #eef1f3;">Contrabassoon</div>
<div class="ms" style="left:470px;top:690px"></div><div class="ms" style="left:508px;top:690px"></div>
<svg class="a" style="left:481.35px;top:701.6px" width="11.7" height="10.4" viewBox="0 0 12 9" preserveAspectRatio="none"><path d="M0 9V2.4Q0 0 2.4 0H9.4Q12 0 12 2.6V9H8.85V2.9Q8.85 2.35 8.4 2.35H7.55V9H4.45V2.35H3.15V9Z" fill="#f2f4f6"/></svg>
<svg class="a" style="left:519.6px;top:702.1px" width="11.4" height="10.0" viewBox="0 0 11 9" preserveAspectRatio="none"><path d="M10.7 1.35H3.3Q1.35 1.35 1.35 2.95Q1.35 4.5 3.3 4.5H7.7Q9.65 4.5 9.65 6.05Q9.65 7.65 7.7 7.65H0.3" fill="none" stroke="#f2f4f6" stroke-width="2.7"/></svg>
<div class="trk" style="top:738px;background:#1f252b"><i style="background:#40ece8"></i></div>
<div class="t" style="left:324.00px;top:747.00px;font-size:13px;color:#eef1f3;transform:scaleX(0.966);-webkit-text-stroke:.2px #eef1f3;">Horn (F) 1</div>
<div class="ms" style="left:470px;top:754px"></div><div class="ms" style="left:508px;top:754px"></div>
<svg class="a" style="left:481.35px;top:765.6px" width="11.7" height="10.4" viewBox="0 0 12 9" preserveAspectRatio="none"><path d="M0 9V2.4Q0 0 2.4 0H9.4Q12 0 12 2.6V9H8.85V2.9Q8.85 2.35 8.4 2.35H7.55V9H4.45V2.35H3.15V9Z" fill="#f2f4f6"/></svg>
<svg class="a" style="left:519.6px;top:766.1px" width="11.4" height="10.0" viewBox="0 0 11 9" preserveAspectRatio="none"><path d="M10.7 1.35H3.3Q1.35 1.35 1.35 2.95Q1.35 4.5 3.3 4.5H7.7Q9.65 4.5 9.65 6.05Q9.65 7.65 7.7 7.65H0.3" fill="none" stroke="#f2f4f6" stroke-width="2.7"/></svg>
<div class="trk" style="top:802px;background:#1f252b"><i style="background:#40b8f0"></i></div>
<div class="t" style="left:324.00px;top:811.00px;font-size:13px;color:#eef1f3;transform:scaleX(0.991);-webkit-text-stroke:.2px #eef1f3;">Horn (F) 2</div>
<div class="ms" style="left:470px;top:818px"></div><div class="ms" style="left:508px;top:818px"></div>
<svg class="a" style="left:481.35px;top:829.6px" width="11.7" height="10.4" viewBox="0 0 12 9" preserveAspectRatio="none"><path d="M0 9V2.4Q0 0 2.4 0H9.4Q12 0 12 2.6V9H8.85V2.9Q8.85 2.35 8.4 2.35H7.55V9H4.45V2.35H3.15V9Z" fill="#f2f4f6"/></svg>
<svg class="a" style="left:519.6px;top:830.1px" width="11.4" height="10.0" viewBox="0 0 11 9" preserveAspectRatio="none"><path d="M10.7 1.35H3.3Q1.35 1.35 1.35 2.95Q1.35 4.5 3.3 4.5H7.7Q9.65 4.5 9.65 6.05Q9.65 7.65 7.7 7.65H0.3" fill="none" stroke="#f2f4f6" stroke-width="2.7"/></svg>
<div class="a" style="left:552px;top:106px;width:1350px;height:40px;background:#252e38;"></div>
<div class="a" style="left:552px;top:150px;width:1350px;height:34px;background:#27607f;"></div>
<div class="a" style="left:552px;top:164px;width:1350px;height:20px;background:#1888c6;border-top:1px solid #25a3ea;"></div>
<div class="a" style="left:552px;top:184px;width:1350px;height:4px;background:#35465f;"></div>
<div class="a" style="left:552px;top:188px;width:1350px;height:34px;background:#145c47;"></div>
<div class="a" style="left:552px;top:222px;width:1350px;height:579px;background:#293546;"></div>
<div class="lane" style="top:226px;background:#4f3d58"></div>
<div class="lane" style="top:290px;background:#2f4a60"></div>
<div class="lane" style="top:354px;background:#2f4a60"></div>
<div class="lane" style="top:418px;background:#2f4a60"></div>
<div class="lane" style="top:482px;background:#2f4a60"></div>
<div class="lane" style="top:546px;background:#2f4a60"></div>
<div class="lane" style="top:610px;background:#2f4a60"></div>
<div class="lane" style="top:674px;background:#2f4a60"></div>
<div class="lane" style="top:738px;background:#2f4a60"></div>
<div class="a" style="left:1033px;top:738px;width:450px;height:60px;background:linear-gradient(#69c4c3 0,#5bbcbc 56%,#1e7073 57%,#1e7073 59.500%,#52b8b9 60.500%,#46b2b3 100%);border-radius:6px;"></div>
<div class="a" style="left:1783px;top:738px;width:119px;height:60px;background:linear-gradient(#69c4c3 0,#5bbcbc 56%,#1e7073 57%,#1e7073 59.500%,#52b8b9 60.500%,#46b2b3 100%);border-radius:6px 0 0 6px;"></div>
<div class="a" style="left:583px;top:106px;width:2px;height:40px;background:#9aa1a8;"></div>
<div class="a" style="left:583px;top:150px;width:2px;height:651px;background:rgba(255,255,255,.33);"></div>
<div class="a" style="left:658px;top:126px;width:1px;height:20px;background:#a9b0b6;"></div>
<div class="t" style="left:588.50px;top:111.00px;font-size:13px;color:#c5cbd0;">7</div>
<div class="a" style="left:733px;top:106px;width:2px;height:40px;background:#9aa1a8;"></div>
<div class="a" style="left:733px;top:150px;width:2px;height:651px;background:rgba(255,255,255,.33);"></div>
<div class="a" style="left:808px;top:126px;width:1px;height:20px;background:#a9b0b6;"></div>
<div class="t" style="left:738.50px;top:111.00px;font-size:13px;color:#c5cbd0;">8</div>
<div class="a" style="left:883px;top:106px;width:2px;height:40px;background:#9aa1a8;"></div>
<div class="a" style="left:883px;top:150px;width:2px;height:651px;background:rgba(255,255,255,.33);"></div>
<div class="a" style="left:958px;top:126px;width:1px;height:20px;background:#a9b0b6;"></div>
<div class="t" style="left:888.50px;top:111.00px;font-size:13px;color:#c5cbd0;">9</div>
<div class="a" style="left:1033px;top:106px;width:2px;height:40px;background:#9aa1a8;"></div>
<div class="a" style="left:1033px;top:150px;width:2px;height:651px;background:rgba(255,255,255,.33);"></div>
<div class="a" style="left:1108px;top:126px;width:1px;height:20px;background:#a9b0b6;"></div>
<div class="t" style="left:1038.50px;top:111.00px;font-size:13px;color:#c5cbd0;">10</div>
<div class="a" style="left:1183px;top:106px;width:2px;height:40px;background:#9aa1a8;"></div>
<div class="a" style="left:1183px;top:150px;width:2px;height:651px;background:rgba(255,255,255,.33);"></div>
<div class="a" style="left:1258px;top:126px;width:1px;height:20px;background:#a9b0b6;"></div>
<div class="t" style="left:1188.50px;top:111.00px;font-size:13px;color:#c5cbd0;">11</div>
<div class="a" style="left:1333px;top:106px;width:2px;height:40px;background:#9aa1a8;"></div>
<div class="a" style="left:1333px;top:150px;width:2px;height:651px;background:rgba(255,255,255,.33);"></div>
<div class="a" style="left:1408px;top:126px;width:1px;height:20px;background:#a9b0b6;"></div>
<div class="t" style="left:1338.50px;top:111.00px;font-size:13px;color:#c5cbd0;">12</div>
<div class="a" style="left:1483px;top:106px;width:2px;height:40px;background:#9aa1a8;"></div>
<div class="a" style="left:1483px;top:150px;width:2px;height:651px;background:rgba(255,255,255,.33);"></div>
<div class="a" style="left:1558px;top:126px;width:1px;height:20px;background:#a9b0b6;"></div>
<div class="t" style="left:1488.50px;top:111.00px;font-size:13px;color:#c5cbd0;">13</div>
<div class="a" style="left:1633px;top:106px;width:2px;height:40px;background:#9aa1a8;"></div>
<div class="a" style="left:1633px;top:150px;width:2px;height:651px;background:rgba(255,255,255,.33);"></div>
<div class="a" style="left:1708px;top:126px;width:1px;height:20px;background:#a9b0b6;"></div>
<div class="t" style="left:1638.50px;top:111.00px;font-size:13px;color:#c5cbd0;">14</div>
<div class="a" style="left:1783px;top:106px;width:2px;height:40px;background:#9aa1a8;"></div>
<div class="a" style="left:1783px;top:150px;width:2px;height:651px;background:rgba(255,255,255,.33);"></div>
<div class="a" style="left:1858px;top:126px;width:1px;height:20px;background:#a9b0b6;"></div>
<div class="t" style="left:1788.50px;top:111.00px;font-size:13px;color:#c5cbd0;">15</div>
<div class="a" style="left:552px;top:222px;width:1350px;height:4px;background:rgba(41,53,70,.6);"></div>
<div class="a" style="left:552px;top:286px;width:1350px;height:4px;background:rgba(41,53,70,.6);"></div>
<div class="a" style="left:552px;top:350px;width:1350px;height:4px;background:rgba(41,53,70,.6);"></div>
<div class="a" style="left:552px;top:414px;width:1350px;height:4px;background:rgba(41,53,70,.6);"></div>
<div class="a" style="left:552px;top:478px;width:1350px;height:4px;background:rgba(41,53,70,.6);"></div>
<div class="a" style="left:552px;top:542px;width:1350px;height:4px;background:rgba(41,53,70,.6);"></div>
<div class="a" style="left:552px;top:606px;width:1350px;height:4px;background:rgba(41,53,70,.6);"></div>
<div class="a" style="left:552px;top:670px;width:1350px;height:4px;background:rgba(41,53,70,.6);"></div>
<div class="a" style="left:552px;top:734px;width:1350px;height:4px;background:rgba(41,53,70,.6);"></div>
<div class="a" style="left:552px;top:798px;width:1350px;height:4px;background:rgba(41,53,70,.6);"></div>
<div class="a" style="left:552px;top:802px;width:1350px;height:22px;background:#181c20;"></div>
<div class="a" style="left:1902px;top:104px;width:18px;height:720px;background:#181c20;"></div>
<div class="a" style="left:1906px;top:228px;width:10px;height:199px;background:#414c57;border-radius:5px;"></div>
<div class="a" style="left:554px;top:807.2px;width:11.8px;height:11.4px;background:#333c46;border-radius:2px;"></div>
<div class="a" style="left:556.7px;top:812px;width:6.7px;height:2.2px;background:#e3e7ea;"></div>
<div class="a" style="left:574px;top:811px;width:106.2px;height:3.8px;background:#050607;border-radius:1.9px;"></div>
<div class="a" style="left:574px;top:811px;width:38px;height:3.8px;background:#45a5ee;border-radius:1.9px;"></div>
<div class="a" style="left:607.5px;top:805.9px;width:14px;height:14px;background:#0c0e10;border-radius:7px;"></div>
<div class="a" style="left:608.5px;top:806.9px;width:12px;height:12px;background:#4a5560;border-radius:6px;"></div>
<div class="a" style="left:688px;top:807.2px;width:11.8px;height:11.4px;background:#333c46;border-radius:2px;"></div>
<div class="a" style="left:690.5px;top:811.9px;width:7px;height:2.2px;background:#e3e7ea;"></div>
<div class="a" style="left:692.9px;top:809.5px;width:2.2px;height:7px;background:#e3e7ea;"></div>
<div class="a" style="left:842px;top:807px;width:214px;height:12px;background:#485460;border-radius:6px;"></div>
<div class="a" style="left:0px;top:824px;width:1920px;height:40px;background:#181c20;"></div>
<div class="a" style="left:0px;top:864px;width:1920px;height:191px;background:#111417;"></div>
<div class="a" style="left:10px;top:830px;width:73px;height:28px;background:#252c34;border-radius:4px;"></div>
<div class="a" style="left:10px;top:830px;width:36px;height:28px;background:#2a6596;border-radius:4px;"></div>
<svg class="a" style="left:17px;top:833px" width="22" height="22" viewBox="0 0 22 22" ><path d="M4 1.500v19M11.500 1.500v19M18.500 1.500v19" stroke="#fff" stroke-width="1.900"/><rect x="2.100" y="11.500" width="3.800" height="6.500" rx="1.900" fill="#2a6596" stroke="#fff" stroke-width="1.500"/><rect x="9.600" y="4" width="3.800" height="6.500" rx="1.900" fill="#2a6596" stroke="#fff" stroke-width="1.500"/><rect x="16.600" y="8.500" width="3.800" height="6.500" rx="1.900" fill="#2a6596" stroke="#fff" stroke-width="1.500"/></svg>
<svg class="a" style="left:55px;top:835px" width="20" height="17" viewBox="0 0 20 17" ><path d="M0.500 1.500h8.500M0.500 6.200h8.500M0.500 10.900h8.500M14.500 1.500h4.500M10.500 4.800h3.500M14.500 12h4.500M10.500 15.500h3.500" stroke="#e6eaee" stroke-width="1.800"/></svg>
<div class="t" style="left:274.50px;top:838.00px;font-size:13px;color:#d4d9dd;transform:scaleX(0.967);">Показывать:</div>
<div class="a" style="left:352px;top:830px;width:96px;height:28px;background:#3fa9f5;border-radius:5px;"></div>
<div class="t" style="left:358.00px;top:838.00px;font-size:13px;color:#0c1822;transform:scaleX(1.024);-webkit-text-stroke:.45px #0c1822;">Инструменты</div>
<div class="a" style="left:452px;top:830px;width:41px;height:28px;background:#252c34;border-radius:5px;"></div>
<div class="t" style="left:458.75px;top:838.00px;font-size:13px;color:#e6eaee;transform:scaleX(1.021);-webkit-text-stroke:.2px #e6eaee;">MIDI</div>
<div class="a" style="left:497px;top:830px;width:50px;height:28px;background:#252c34;border-radius:5px;"></div>
<div class="t" style="left:503.00px;top:838.00px;font-size:13px;color:#e6eaee;transform:scaleX(0.994);-webkit-text-stroke:.2px #e6eaee;">Видео</div>
<div class="a" style="left:551px;top:830px;width:27px;height:28px;background:#3fa9f5;border-radius:5px;"></div>
<div class="t" style="left:557.50px;top:838.00px;font-size:13px;color:#0c1822;transform:scaleX(0.811);-webkit-text-stroke:.45px #0c1822;">FX</div>
<div class="a" style="left:582px;top:830px;width:118px;height:28px;background:#252c34;border-radius:5px;"></div>
<div class="t" style="left:588.00px;top:838.00px;font-size:13px;color:#e6eaee;transform:scaleX(1.021);-webkit-text-stroke:.2px #e6eaee;">Неиспользуемые</div>
<div class="t" style="left:732.00px;top:838.00px;font-size:13px;color:#d4d9dd;transform:scaleX(0.975);">Выключить все:</div>
<div class="a" style="left:831px;top:830px;width:23px;height:27px;background:#181c20;border-radius:4px;box-shadow:inset 0 0 0 1.500px #101316;"></div>
<div class="a" style="left:861.5px;top:830px;width:23.5px;height:27px;background:#181c20;border-radius:4px;box-shadow:inset 0 0 0 1.500px #101316;"></div>
<svg class="a" style="left:837.48px;top:838.91px" width="11.23" height="9.98" viewBox="0 0 12 9" preserveAspectRatio="none"><path d="M0 9V2.4Q0 0 2.4 0H9.4Q12 0 12 2.6V9H8.85V2.9Q8.85 2.35 8.4 2.35H7.55V9H4.45V2.35H3.15V9Z" fill="#868d95"/></svg>
<svg class="a" style="left:867.41px;top:839.0px" width="11.17" height="9.8" viewBox="0 0 11 9" preserveAspectRatio="none"><path d="M10.7 1.35H3.3Q1.35 1.35 1.35 2.95Q1.35 4.5 3.3 4.5H7.7Q9.65 4.5 9.65 6.05Q9.65 7.65 7.7 7.65H0.3" fill="none" stroke="#868d95" stroke-width="2.7"/></svg>
<div class="a" style="left:918px;top:830px;width:36px;height:27.5px;background:#242a31;border-radius:4px;"></div>
<div class="a" style="left:958px;top:830px;width:36px;height:27.5px;background:#242a31;border-radius:4px;"></div>
<div class="t" style="left:925.70px;top:834.00px;font-size:12.8px;color:#e8eef4;font-weight:bold;transform:scaleX(0.977);">FX</div>
<div class="t" style="left:965.60px;top:834.00px;font-size:12.8px;color:#e8eef4;font-weight:bold;transform:scaleX(0.970);">FX</div>
<svg class="a" style="left:937.8px;top:846.5px" width="8.6" height="7.5" viewBox="0 0 8.6 7.5" ><rect x="0" y="0" width="8.600" height="7.500" rx="1.500" fill="#e8eef4"/><path d="M4.300 1.500v4.500M1.800 3.750h5" stroke="#242a31" stroke-width="1.300"/></svg>
<svg class="a" style="left:977.7px;top:846.5px" width="8.6" height="7.5" viewBox="0 0 8.6 7.5" ><rect x="0" y="0" width="8.600" height="7.500" rx="1.500" fill="#e8eef4"/><path d="M1.800 3.750h5" stroke="#242a31" stroke-width="1.400"/></svg>
<div class="a" style="left:1026px;top:830px;width:36px;height:28px;background:#242a31;border-radius:4px;"></div>
<div class="a" style="left:1066px;top:830px;width:36px;height:28px;background:#242a31;border-radius:4px;"></div>
<svg class="a" style="left:1031px;top:836px" width="26" height="16" viewBox="0 0 26 16" ><path d="M1.900 13.400a11.300 11.300 0 0 1 22.600 0z" fill="none" stroke="#eef2f6" stroke-width="1.700" stroke-linejoin="round"/><path d="M6.900 13.400a6.300 6.300 0 0 1 12.600 0M13.200 2.200V13.400" fill="none" stroke="#eef2f6" stroke-width="1.600"/></svg>
<svg class="a" style="left:1072.1px;top:832px" width="24" height="24" viewBox="0 0 24 24" ><path d="M15.65 0.41A4.4 4.4 0 0 1 8.35 0.41M15.65 23.49A4.4 4.4 0 0 0 8.35 23.49M18.22 2.98A8 8 0 0 1 5.78 2.98M18.22 20.92A8 8 0 0 0 5.78 20.92M20.83 5.63A11.7 11.7 0 0 1 3.17 5.63M20.83 18.27A11.7 11.7 0 0 0 3.17 18.27" fill="none" stroke="#eef2f6" stroke-width="1.500" stroke-linecap="round"/></svg>
<svg class="a" style="left:1888px;top:832px" width="20" height="23" viewBox="0 0 20 23" ><path d="M1 9h18M1 14h18" fill="none" stroke="#a9afb5" stroke-width="1.300"/><path d="M6.200 6.700l3.800-3.600l3.800 3.600M6.200 17.600l3.800 3.600l3.800-3.600" fill="none" stroke="#b9bfc5" stroke-width="1.200" stroke-linecap="round" stroke-linejoin="round"/></svg>
<div class="strip" style="left:6px;"><div class="pan"></div><div class="val"></div><div class="mb" style="top:62.500px"></div><div class="mb" style="top:98.500px"></div><div class="ftrk"></div><div class="fcap"></div><div class="meter"></div><div class="dash"></div><div class="lbl" style="background:#b9b9b9"></div></div>
<div class="t" style="left:42.50px;top:880.00px;font-size:12px;color:#69abe6;transform:scaleX(0.891);">C</div>
<div class="t" style="left:52.80px;top:904.00px;font-size:12px;color:#67a9e6;transform:scaleX(0.985);">0.04</div>
<svg class="a" style="left:21.35px;top:940.7px" width="11.7" height="10.4" viewBox="0 0 12 9" preserveAspectRatio="none"><path d="M0 9V2.4Q0 0 2.4 0H9.4Q12 0 12 2.6V9H8.85V2.9Q8.85 2.35 8.4 2.35H7.55V9H4.45V2.35H3.15V9Z" fill="#f2f4f6"/></svg>
<svg class="a" style="left:21.4px;top:977.0px" width="11.4" height="10.0" viewBox="0 0 11 9" preserveAspectRatio="none"><path d="M10.7 1.35H3.3Q1.35 1.35 1.35 2.95Q1.35 4.5 3.3 4.5H7.7Q9.65 4.5 9.65 6.05Q9.65 7.65 7.7 7.65H0.3" fill="none" stroke="#f2f4f6" stroke-width="2.7"/></svg>
<div class="t" style="left:12.90px;top:1037.00px;font-size:11.5px;color:rgba(0,0,0,.8);transform:scaleX(0.950);-webkit-text-stroke:.45px rgba(0,0,0,.8);">DoricoBeep 1</div>
<div class="strip" style="left:94px;"><div class="pan"></div><div class="val"></div><div class="mb" style="top:62.500px"></div><div class="mb" style="top:98.500px"></div><div class="ftrk"></div><div class="fcap"></div><div class="meter"></div><div class="dash"></div><div class="lbl" style="background:#f03e5e"></div></div>
<div class="t" style="left:130.50px;top:880.00px;font-size:12px;color:#69abe6;transform:scaleX(0.891);">C</div>
<div class="t" style="left:140.80px;top:904.00px;font-size:12px;color:#67a9e6;transform:scaleX(0.985);">0.04</div>
<svg class="a" style="left:109.35px;top:940.7px" width="11.7" height="10.4" viewBox="0 0 12 9" preserveAspectRatio="none"><path d="M0 9V2.4Q0 0 2.4 0H9.4Q12 0 12 2.6V9H8.85V2.9Q8.85 2.35 8.4 2.35H7.55V9H4.45V2.35H3.15V9Z" fill="#f2f4f6"/></svg>
<svg class="a" style="left:109.4px;top:977.0px" width="11.4" height="10.0" viewBox="0 0 11 9" preserveAspectRatio="none"><path d="M10.7 1.35H3.3Q1.35 1.35 1.35 2.95Q1.35 4.5 3.3 4.5H7.7Q9.65 4.5 9.65 6.05Q9.65 7.65 7.7 7.65H0.3" fill="none" stroke="#f2f4f6" stroke-width="2.7"/></svg>
<div class="t" style="left:117.30px;top:1037.00px;font-size:11.5px;color:rgba(0,0,0,.8);transform:scaleX(0.951);-webkit-text-stroke:.45px rgba(0,0,0,.8);">Flute 1</div>
<div class="strip" style="left:182px;"><div class="pan"></div><div class="val"></div><div class="mb" style="top:62.500px"></div><div class="mb" style="top:98.500px"></div><div class="ftrk"></div><div class="fcap"></div><div class="meter"></div><div class="dash"></div><div class="lbl" style="background:#f07840"></div></div>
<div class="t" style="left:218.50px;top:880.00px;font-size:12px;color:#69abe6;transform:scaleX(0.891);">C</div>
<div class="t" style="left:228.80px;top:904.00px;font-size:12px;color:#67a9e6;transform:scaleX(0.985);">0.04</div>
<svg class="a" style="left:197.35px;top:940.7px" width="11.7" height="10.4" viewBox="0 0 12 9" preserveAspectRatio="none"><path d="M0 9V2.4Q0 0 2.4 0H9.4Q12 0 12 2.6V9H8.85V2.9Q8.85 2.35 8.4 2.35H7.55V9H4.45V2.35H3.15V9Z" fill="#f2f4f6"/></svg>
<svg class="a" style="left:197.4px;top:977.0px" width="11.4" height="10.0" viewBox="0 0 11 9" preserveAspectRatio="none"><path d="M10.7 1.35H3.3Q1.35 1.35 1.35 2.95Q1.35 4.5 3.3 4.5H7.7Q9.65 4.5 9.65 6.05Q9.65 7.65 7.7 7.65H0.3" fill="none" stroke="#f2f4f6" stroke-width="2.7"/></svg>
<div class="t" style="left:205.30px;top:1037.00px;font-size:11.5px;color:rgba(0,0,0,.8);transform:scaleX(0.951);-webkit-text-stroke:.45px rgba(0,0,0,.8);">Flute 2</div>
<div class="strip" style="left:270px;"><div class="pan"></div><div class="val"></div><div class="mb" style="top:62.500px"></div><div class="mb" style="top:98.500px"></div><div class="ftrk"></div><div class="fcap"></div><div class="meter"></div><div class="dash"></div><div class="lbl" style="background:#f5d43c"></div></div>
<div class="t" style="left:306.50px;top:880.00px;font-size:12px;color:#69abe6;transform:scaleX(0.891);">C</div>
<div class="t" style="left:316.80px;top:904.00px;font-size:12px;color:#67a9e6;transform:scaleX(0.985);">0.04</div>
<svg class="a" style="left:285.35px;top:940.7px" width="11.7" height="10.4" viewBox="0 0 12 9" preserveAspectRatio="none"><path d="M0 9V2.4Q0 0 2.4 0H9.4Q12 0 12 2.6V9H8.85V2.9Q8.85 2.35 8.4 2.35H7.55V9H4.45V2.35H3.15V9Z" fill="#f2f4f6"/></svg>
<svg class="a" style="left:285.4px;top:977.0px" width="11.4" height="10.0" viewBox="0 0 11 9" preserveAspectRatio="none"><path d="M10.7 1.35H3.3Q1.35 1.35 1.35 2.95Q1.35 4.5 3.3 4.5H7.7Q9.65 4.5 9.65 6.05Q9.65 7.65 7.7 7.65H0.3" fill="none" stroke="#f2f4f6" stroke-width="2.7"/></svg>
<div class="t" style="left:296.64px;top:1037.00px;font-size:11.5px;color:rgba(0,0,0,.8);transform:scaleX(0.951);-webkit-text-stroke:.45px rgba(0,0,0,.8);">Oboe</div>
<div class="strip" style="left:358px;"><div class="pan"></div><div class="val"></div><div class="mb" style="top:62.500px"></div><div class="mb" style="top:98.500px"></div><div class="ftrk"></div><div class="fcap"></div><div class="meter"></div><div class="dash"></div><div class="lbl" style="background:#b4ec3c"></div></div>
<div class="t" style="left:394.50px;top:880.00px;font-size:12px;color:#69abe6;transform:scaleX(0.891);">C</div>
<div class="t" style="left:404.80px;top:904.00px;font-size:12px;color:#67a9e6;transform:scaleX(0.985);">0.04</div>
<svg class="a" style="left:373.35px;top:940.7px" width="11.7" height="10.4" viewBox="0 0 12 9" preserveAspectRatio="none"><path d="M0 9V2.4Q0 0 2.4 0H9.4Q12 0 12 2.6V9H8.85V2.9Q8.85 2.35 8.4 2.35H7.55V9H4.45V2.35H3.15V9Z" fill="#f2f4f6"/></svg>
<svg class="a" style="left:373.4px;top:977.0px" width="11.4" height="10.0" viewBox="0 0 11 9" preserveAspectRatio="none"><path d="M10.7 1.35H3.3Q1.35 1.35 1.35 2.95Q1.35 4.5 3.3 4.5H7.7Q9.65 4.5 9.65 6.05Q9.65 7.65 7.7 7.65H0.3" fill="none" stroke="#f2f4f6" stroke-width="2.7"/></svg>
<div class="t" style="left:374.62px;top:1037.00px;font-size:11.5px;color:rgba(0,0,0,.8);transform:scaleX(0.950);-webkit-text-stroke:.45px rgba(0,0,0,.8);">Clarinet 1</div>
<div class="strip" style="left:446px;"><div class="pan"></div><div class="val"></div><div class="mb" style="top:62.500px"></div><div class="mb" style="top:98.500px"></div><div class="ftrk"></div><div class="fcap"></div><div class="meter"></div><div class="dash"></div><div class="lbl" style="background:#7aec3e"></div></div>
<div class="t" style="left:482.50px;top:880.00px;font-size:12px;color:#69abe6;transform:scaleX(0.891);">C</div>
<div class="t" style="left:492.80px;top:904.00px;font-size:12px;color:#67a9e6;transform:scaleX(0.985);">0.04</div>
<svg class="a" style="left:461.35px;top:940.7px" width="11.7" height="10.4" viewBox="0 0 12 9" preserveAspectRatio="none"><path d="M0 9V2.4Q0 0 2.4 0H9.4Q12 0 12 2.6V9H8.85V2.9Q8.85 2.35 8.4 2.35H7.55V9H4.45V2.35H3.15V9Z" fill="#f2f4f6"/></svg>
<svg class="a" style="left:461.4px;top:977.0px" width="11.4" height="10.0" viewBox="0 0 11 9" preserveAspectRatio="none"><path d="M10.7 1.35H3.3Q1.35 1.35 1.35 2.95Q1.35 4.5 3.3 4.5H7.7Q9.65 4.5 9.65 6.05Q9.65 7.65 7.7 7.65H0.3" fill="none" stroke="#f2f4f6" stroke-width="2.7"/></svg>
<div class="t" style="left:462.62px;top:1037.00px;font-size:11.5px;color:rgba(0,0,0,.8);transform:scaleX(0.950);-webkit-text-stroke:.45px rgba(0,0,0,.8);">Clarinet 2</div>
<div class="strip" style="left:534px;"><div class="pan"></div><div class="val"></div><div class="mb" style="top:62.500px"></div><div class="mb" style="top:98.500px"></div><div class="ftrk"></div><div class="fcap"></div><div class="meter"></div><div class="dash"></div><div class="lbl" style="background:#3ee850"></div></div>
<div class="t" style="left:570.50px;top:880.00px;font-size:12px;color:#69abe6;transform:scaleX(0.891);">C</div>
<div class="t" style="left:580.80px;top:904.00px;font-size:12px;color:#67a9e6;transform:scaleX(0.985);">0.04</div>
<svg class="a" style="left:549.35px;top:940.7px" width="11.7" height="10.4" viewBox="0 0 12 9" preserveAspectRatio="none"><path d="M0 9V2.4Q0 0 2.4 0H9.4Q12 0 12 2.6V9H8.85V2.9Q8.85 2.35 8.4 2.35H7.55V9H4.45V2.35H3.15V9Z" fill="#f2f4f6"/></svg>
<svg class="a" style="left:549.4px;top:977.0px" width="11.4" height="10.0" viewBox="0 0 11 9" preserveAspectRatio="none"><path d="M10.7 1.35H3.3Q1.35 1.35 1.35 2.95Q1.35 4.5 3.3 4.5H7.7Q9.65 4.5 9.65 6.05Q9.65 7.65 7.7 7.65H0.3" fill="none" stroke="#f2f4f6" stroke-width="2.7"/></svg>
<div class="t" style="left:548.19px;top:1037.00px;font-size:11.5px;color:rgba(0,0,0,.8);transform:scaleX(0.950);-webkit-text-stroke:.45px rgba(0,0,0,.8);">Bassoon 1</div>
<div class="strip" style="left:622px;"><div class="pan"></div><div class="val"></div><div class="mb" style="top:62.500px"></div><div class="mb" style="top:98.500px"></div><div class="ftrk"></div><div class="fcap"></div><div class="meter"></div><div class="dash"></div><div class="lbl" style="background:#40e888"></div></div>
<div class="t" style="left:658.50px;top:880.00px;font-size:12px;color:#69abe6;transform:scaleX(0.891);">C</div>
<div class="t" style="left:668.80px;top:904.00px;font-size:12px;color:#67a9e6;transform:scaleX(0.985);">0.04</div>
<svg class="a" style="left:637.35px;top:940.7px" width="11.7" height="10.4" viewBox="0 0 12 9" preserveAspectRatio="none"><path d="M0 9V2.4Q0 0 2.4 0H9.4Q12 0 12 2.6V9H8.85V2.9Q8.85 2.35 8.4 2.35H7.55V9H4.45V2.35H3.15V9Z" fill="#f2f4f6"/></svg>
<svg class="a" style="left:637.4px;top:977.0px" width="11.4" height="10.0" viewBox="0 0 11 9" preserveAspectRatio="none"><path d="M10.7 1.35H3.3Q1.35 1.35 1.35 2.95Q1.35 4.5 3.3 4.5H7.7Q9.65 4.5 9.65 6.05Q9.65 7.65 7.7 7.65H0.3" fill="none" stroke="#f2f4f6" stroke-width="2.7"/></svg>
<div class="t" style="left:636.19px;top:1037.00px;font-size:11.5px;color:rgba(0,0,0,.8);transform:scaleX(0.950);-webkit-text-stroke:.45px rgba(0,0,0,.8);">Bassoon 2</div>
<div class="strip" style="left:710px;"><div class="pan"></div><div class="val"></div><div class="mb" style="top:62.500px"></div><div class="mb" style="top:98.500px"></div><div class="ftrk"></div><div class="fcap"></div><div class="meter"></div><div class="dash"></div><div class="lbl" style="background:#40e8c0"></div></div>
<div class="t" style="left:746.50px;top:880.00px;font-size:12px;color:#69abe6;transform:scaleX(0.891);">C</div>
<div class="t" style="left:756.80px;top:904.00px;font-size:12px;color:#67a9e6;transform:scaleX(0.985);">0.04</div>
<svg class="a" style="left:725.35px;top:940.7px" width="11.7" height="10.4" viewBox="0 0 12 9" preserveAspectRatio="none"><path d="M0 9V2.4Q0 0 2.4 0H9.4Q12 0 12 2.6V9H8.85V2.9Q8.85 2.35 8.4 2.35H7.55V9H4.45V2.35H3.15V9Z" fill="#f2f4f6"/></svg>
<svg class="a" style="left:725.4px;top:977.0px" width="11.4" height="10.0" viewBox="0 0 11 9" preserveAspectRatio="none"><path d="M10.7 1.35H3.3Q1.35 1.35 1.35 2.95Q1.35 4.5 3.3 4.5H7.7Q9.65 4.5 9.65 6.05Q9.65 7.65 7.7 7.65H0.3" fill="none" stroke="#f2f4f6" stroke-width="2.7"/></svg>
<div class="t" style="left:712.95px;top:1037.00px;font-size:11.5px;color:rgba(0,0,0,.8);transform:scaleX(0.950);-webkit-text-stroke:.45px rgba(0,0,0,.8);">Contrabassoon</div>
<div class="strip" style="left:798px;"><div class="pan"></div><div class="val"></div><div class="mb" style="top:62.500px"></div><div class="mb" style="top:98.500px"></div><div class="ftrk"></div><div class="fcap"></div><div class="meter"></div><div class="dash"></div><div class="lbl" style="background:#40ece8"></div></div>
<div class="t" style="left:834.50px;top:880.00px;font-size:12px;color:#69abe6;transform:scaleX(0.891);">C</div>
<div class="t" style="left:844.80px;top:904.00px;font-size:12px;color:#67a9e6;transform:scaleX(0.985);">0.04</div>
<svg class="a" style="left:813.35px;top:940.7px" width="11.7" height="10.4" viewBox="0 0 12 9" preserveAspectRatio="none"><path d="M0 9V2.4Q0 0 2.4 0H9.4Q12 0 12 2.6V9H8.85V2.9Q8.85 2.35 8.4 2.35H7.55V9H4.45V2.35H3.15V9Z" fill="#f2f4f6"/></svg>
<svg class="a" style="left:813.4px;top:977.0px" width="11.4" height="10.0" viewBox="0 0 11 9" preserveAspectRatio="none"><path d="M10.7 1.35H3.3Q1.35 1.35 1.35 2.95Q1.35 4.5 3.3 4.5H7.7Q9.65 4.5 9.65 6.05Q9.65 7.65 7.7 7.65H0.3" fill="none" stroke="#f2f4f6" stroke-width="2.7"/></svg>
<div class="t" style="left:821.60px;top:1037.00px;font-size:11.5px;color:rgba(0,0,0,.8);transform:scaleX(0.950);-webkit-text-stroke:.45px rgba(0,0,0,.8);">Horn 1</div>
<div class="strip" style="left:886px;"><div class="pan"></div><div class="val"></div><div class="mb" style="top:62.500px"></div><div class="mb" style="top:98.500px"></div><div class="ftrk"></div><div class="fcap"></div><div class="meter"></div><div class="dash"></div><div class="lbl" style="background:#40b8f0"></div></div>
<div class="t" style="left:922.50px;top:880.00px;font-size:12px;color:#69abe6;transform:scaleX(0.891);">C</div>
<div class="t" style="left:932.80px;top:904.00px;font-size:12px;color:#67a9e6;transform:scaleX(0.985);">0.04</div>
<svg class="a" style="left:901.35px;top:940.7px" width="11.7" height="10.4" viewBox="0 0 12 9" preserveAspectRatio="none"><path d="M0 9V2.4Q0 0 2.4 0H9.4Q12 0 12 2.6V9H8.85V2.9Q8.85 2.35 8.4 2.35H7.55V9H4.45V2.35H3.15V9Z" fill="#f2f4f6"/></svg>
<svg class="a" style="left:901.4px;top:977.0px" width="11.4" height="10.0" viewBox="0 0 11 9" preserveAspectRatio="none"><path d="M10.7 1.35H3.3Q1.35 1.35 1.35 2.95Q1.35 4.5 3.3 4.5H7.7Q9.65 4.5 9.65 6.05Q9.65 7.65 7.7 7.65H0.3" fill="none" stroke="#f2f4f6" stroke-width="2.7"/></svg>
<div class="t" style="left:909.60px;top:1037.00px;font-size:11.5px;color:rgba(0,0,0,.8);transform:scaleX(0.950);-webkit-text-stroke:.45px rgba(0,0,0,.8);">Horn 2</div>
<div class="strip" style="left:974px;"><div class="pan"></div><div class="val"></div><div class="mb" style="top:62.500px"></div><div class="mb" style="top:98.500px"></div><div class="ftrk"></div><div class="fcap"></div><div class="meter"></div><div class="dash"></div><div class="lbl" style="background:#4062f6"></div></div>
<div class="t" style="left:1010.50px;top:880.00px;font-size:12px;color:#69abe6;transform:scaleX(0.891);">C</div>
<div class="t" style="left:1020.80px;top:904.00px;font-size:12px;color:#67a9e6;transform:scaleX(0.985);">0.04</div>
<svg class="a" style="left:989.35px;top:940.7px" width="11.7" height="10.4" viewBox="0 0 12 9" preserveAspectRatio="none"><path d="M0 9V2.4Q0 0 2.4 0H9.4Q12 0 12 2.6V9H8.85V2.9Q8.85 2.35 8.4 2.35H7.55V9H4.45V2.35H3.15V9Z" fill="#f2f4f6"/></svg>
<svg class="a" style="left:989.4px;top:977.0px" width="11.4" height="10.0" viewBox="0 0 11 9" preserveAspectRatio="none"><path d="M10.7 1.35H3.3Q1.35 1.35 1.35 2.95Q1.35 4.5 3.3 4.5H7.7Q9.65 4.5 9.65 6.05Q9.65 7.65 7.7 7.65H0.3" fill="none" stroke="#f2f4f6" stroke-width="2.7"/></svg>
<div class="t" style="left:997.60px;top:1037.00px;font-size:11.5px;color:rgba(0,0,0,.8);transform:scaleX(0.950);-webkit-text-stroke:.45px rgba(0,0,0,.8);">Horn 3</div>
<div class="strip" style="left:1062px;"><div class="pan"></div><div class="val"></div><div class="mb" style="top:62.500px"></div><div class="mb" style="top:98.500px"></div><div class="ftrk"></div><div class="fcap"></div><div class="meter"></div><div class="dash"></div><div class="lbl" style="background:#7848f6"></div></div>
<div class="t" style="left:1098.50px;top:880.00px;font-size:12px;color:#69abe6;transform:scaleX(0.891);">C</div>
<div class="t" style="left:1108.80px;top:904.00px;font-size:12px;color:#67a9e6;transform:scaleX(0.985);">0.04</div>
<svg class="a" style="left:1077.35px;top:940.7px" width="11.7" height="10.4" viewBox="0 0 12 9" preserveAspectRatio="none"><path d="M0 9V2.4Q0 0 2.4 0H9.4Q12 0 12 2.6V9H8.85V2.9Q8.85 2.35 8.4 2.35H7.55V9H4.45V2.35H3.15V9Z" fill="#f2f4f6"/></svg>
<svg class="a" style="left:1077.4px;top:977.0px" width="11.4" height="10.0" viewBox="0 0 11 9" preserveAspectRatio="none"><path d="M10.7 1.35H3.3Q1.35 1.35 1.35 2.95Q1.35 4.5 3.3 4.5H7.7Q9.65 4.5 9.65 6.05Q9.65 7.65 7.7 7.65H0.3" fill="none" stroke="#f2f4f6" stroke-width="2.7"/></svg>
<div class="t" style="left:1085.60px;top:1037.00px;font-size:11.5px;color:rgba(0,0,0,.8);transform:scaleX(0.950);-webkit-text-stroke:.45px rgba(0,0,0,.8);">Horn 4</div>
<div class="strip" style="left:1150px;"><div class="pan"></div><div class="val"></div><div class="mb" style="top:62.500px"></div><div class="mb" style="top:98.500px"></div><div class="ftrk"></div><div class="fcap"></div><div class="meter"></div><div class="dash"></div><div class="lbl" style="background:#be48f6"></div></div>
<div class="t" style="left:1186.50px;top:880.00px;font-size:12px;color:#69abe6;transform:scaleX(0.891);">C</div>
<div class="t" style="left:1196.80px;top:904.00px;font-size:12px;color:#67a9e6;transform:scaleX(0.985);">0.04</div>
<svg class="a" style="left:1165.35px;top:940.7px" width="11.7" height="10.4" viewBox="0 0 12 9" preserveAspectRatio="none"><path d="M0 9V2.4Q0 0 2.4 0H9.4Q12 0 12 2.6V9H8.85V2.9Q8.85 2.35 8.4 2.35H7.55V9H4.45V2.35H3.15V9Z" fill="#f2f4f6"/></svg>
<svg class="a" style="left:1165.4px;top:977.0px" width="11.4" height="10.0" viewBox="0 0 11 9" preserveAspectRatio="none"><path d="M10.7 1.35H3.3Q1.35 1.35 1.35 2.95Q1.35 4.5 3.3 4.5H7.7Q9.65 4.5 9.65 6.05Q9.65 7.65 7.7 7.65H0.3" fill="none" stroke="#f2f4f6" stroke-width="2.7"/></svg>
<div class="t" style="left:1169.86px;top:1037.00px;font-size:11.5px;color:rgba(0,0,0,.8);transform:scaleX(0.950);-webkit-text-stroke:.45px rgba(0,0,0,.8);">Trumpet</div>
<div class="strip" style="left:1238px;"><div class="pan"></div><div class="val"></div><div class="mb" style="top:62.500px"></div><div class="mb" style="top:98.500px"></div><div class="ftrk"></div><div class="fcap"></div><div class="meter"></div><div class="dash"></div><div class="lbl" style="background:#f040ee"></div></div>
<div class="t" style="left:1274.50px;top:880.00px;font-size:12px;color:#69abe6;transform:scaleX(0.891);">C</div>
<div class="t" style="left:1284.80px;top:904.00px;font-size:12px;color:#67a9e6;transform:scaleX(0.985);">0.04</div>
<svg class="a" style="left:1253.35px;top:940.7px" width="11.7" height="10.4" viewBox="0 0 12 9" preserveAspectRatio="none"><path d="M0 9V2.4Q0 0 2.4 0H9.4Q12 0 12 2.6V9H8.85V2.9Q8.85 2.35 8.4 2.35H7.55V9H4.45V2.35H3.15V9Z" fill="#f2f4f6"/></svg>
<svg class="a" style="left:1253.4px;top:977.0px" width="11.4" height="10.0" viewBox="0 0 11 9" preserveAspectRatio="none"><path d="M10.7 1.35H3.3Q1.35 1.35 1.35 2.95Q1.35 4.5 3.3 4.5H7.7Q9.65 4.5 9.65 6.05Q9.65 7.65 7.7 7.65H0.3" fill="none" stroke="#f2f4f6" stroke-width="2.7"/></svg>
<div class="t" style="left:1248.75px;top:1037.00px;font-size:11.5px;color:rgba(0,0,0,.8);transform:scaleX(0.950);-webkit-text-stroke:.45px rgba(0,0,0,.8);">Trombone 1</div>
<div class="strip" style="left:1326px;"><div class="pan"></div><div class="val"></div><div class="mb" style="top:62.500px"></div><div class="mb" style="top:98.500px"></div><div class="ftrk"></div><div class="fcap"></div><div class="meter"></div><div class="dash"></div><div class="lbl" style="background:#f040d0"></div></div>
<div class="t" style="left:1362.50px;top:880.00px;font-size:12px;color:#69abe6;transform:scaleX(0.891);">C</div>
<div class="t" style="left:1372.80px;top:904.00px;font-size:12px;color:#67a9e6;transform:scaleX(0.985);">0.04</div>
<svg class="a" style="left:1341.35px;top:940.7px" width="11.7" height="10.4" viewBox="0 0 12 9" preserveAspectRatio="none"><path d="M0 9V2.4Q0 0 2.4 0H9.4Q12 0 12 2.6V9H8.85V2.9Q8.85 2.35 8.4 2.35H7.55V9H4.45V2.35H3.15V9Z" fill="#f2f4f6"/></svg>
<svg class="a" style="left:1341.4px;top:977.0px" width="11.4" height="10.0" viewBox="0 0 11 9" preserveAspectRatio="none"><path d="M10.7 1.35H3.3Q1.35 1.35 1.35 2.95Q1.35 4.5 3.3 4.5H7.7Q9.65 4.5 9.65 6.05Q9.65 7.65 7.7 7.65H0.3" fill="none" stroke="#f2f4f6" stroke-width="2.7"/></svg>
<div class="t" style="left:1336.75px;top:1037.00px;font-size:11.5px;color:rgba(0,0,0,.8);transform:scaleX(0.950);-webkit-text-stroke:.45px rgba(0,0,0,.8);">Trombone 2</div>
<div class="strip" style="left:1414px;"><div class="pan"></div><div class="val"></div><div class="mb" style="top:62.500px"></div><div class="mb" style="top:98.500px"></div><div class="ftrk"></div><div class="fcap"></div><div class="meter"></div><div class="dash"></div><div class="lbl" style="background:#f04098"></div></div>
<div class="t" style="left:1450.50px;top:880.00px;font-size:12px;color:#69abe6;transform:scaleX(0.891);">C</div>
<div class="t" style="left:1460.80px;top:904.00px;font-size:12px;color:#67a9e6;transform:scaleX(0.985);">0.04</div>
<svg class="a" style="left:1429.35px;top:940.7px" width="11.7" height="10.4" viewBox="0 0 12 9" preserveAspectRatio="none"><path d="M0 9V2.4Q0 0 2.4 0H9.4Q12 0 12 2.6V9H8.85V2.9Q8.85 2.35 8.4 2.35H7.55V9H4.45V2.35H3.15V9Z" fill="#f2f4f6"/></svg>
<svg class="a" style="left:1429.4px;top:977.0px" width="11.4" height="10.0" viewBox="0 0 11 9" preserveAspectRatio="none"><path d="M10.7 1.35H3.3Q1.35 1.35 1.35 2.95Q1.35 4.5 3.3 4.5H7.7Q9.65 4.5 9.65 6.05Q9.65 7.65 7.7 7.65H0.3" fill="none" stroke="#f2f4f6" stroke-width="2.7"/></svg>
<div class="t" style="left:1416.00px;top:1037.00px;font-size:11.5px;color:rgba(0,0,0,.8);transform:scaleX(0.943);-webkit-text-stroke:.45px rgba(0,0,0,.8);">Bass Trombone</div>
<div class="strip" style="left:1502px;"><div class="pan"></div><div class="val"></div><div class="mb" style="top:62.500px"></div><div class="mb" style="top:98.500px"></div><div class="ftrk"></div><div class="fcap"></div><div class="meter"></div><div class="dash"></div><div class="lbl" style="background:#f04060"></div></div>
<div class="t" style="left:1538.50px;top:880.00px;font-size:12px;color:#69abe6;transform:scaleX(0.891);">C</div>
<div class="t" style="left:1548.80px;top:904.00px;font-size:12px;color:#67a9e6;transform:scaleX(0.985);">0.04</div>
<svg class="a" style="left:1517.35px;top:940.7px" width="11.7" height="10.4" viewBox="0 0 12 9" preserveAspectRatio="none"><path d="M0 9V2.4Q0 0 2.4 0H9.4Q12 0 12 2.6V9H8.85V2.9Q8.85 2.35 8.4 2.35H7.55V9H4.45V2.35H3.15V9Z" fill="#f2f4f6"/></svg>
<svg class="a" style="left:1517.4px;top:977.0px" width="11.4" height="10.0" viewBox="0 0 11 9" preserveAspectRatio="none"><path d="M10.7 1.35H3.3Q1.35 1.35 1.35 2.95Q1.35 4.5 3.3 4.5H7.7Q9.65 4.5 9.65 6.05Q9.65 7.65 7.7 7.65H0.3" fill="none" stroke="#f2f4f6" stroke-width="2.7"/></svg>
<div class="t" style="left:1529.75px;top:1037.00px;font-size:11.5px;color:rgba(0,0,0,.8);transform:scaleX(0.949);-webkit-text-stroke:.45px rgba(0,0,0,.8);">Tuba</div>
<div class="strip" style="left:1590px;"><div class="pan"></div><div class="val"></div><div class="mb" style="top:62.500px"></div><div class="mb" style="top:98.500px"></div><div class="ftrk"></div><div class="fcap"></div><div class="meter"></div><div class="dash"></div><div class="lbl" style="background:#f07840"></div></div>
<div class="t" style="left:1626.50px;top:880.00px;font-size:12px;color:#69abe6;transform:scaleX(0.891);">C</div>
<div class="t" style="left:1636.80px;top:904.00px;font-size:12px;color:#67a9e6;transform:scaleX(0.985);">0.04</div>
<svg class="a" style="left:1605.35px;top:940.7px" width="11.7" height="10.4" viewBox="0 0 12 9" preserveAspectRatio="none"><path d="M0 9V2.4Q0 0 2.4 0H9.4Q12 0 12 2.6V9H8.85V2.9Q8.85 2.35 8.4 2.35H7.55V9H4.45V2.35H3.15V9Z" fill="#f2f4f6"/></svg>
<svg class="a" style="left:1605.4px;top:977.0px" width="11.4" height="10.0" viewBox="0 0 11 9" preserveAspectRatio="none"><path d="M10.7 1.35H3.3Q1.35 1.35 1.35 2.95Q1.35 4.5 3.3 4.5H7.7Q9.65 4.5 9.65 6.05Q9.65 7.65 7.7 7.65H0.3" fill="none" stroke="#f2f4f6" stroke-width="2.7"/></svg>
<div class="t" style="left:1592.77px;top:1037.00px;font-size:11.5px;color:rgba(0,0,0,.8);transform:scaleX(0.950);-webkit-text-stroke:.45px rgba(0,0,0,.8);">Timpani [Track]</div>
<div class="strip" style="left:1678px;"><div class="pan"></div><div class="val"></div><div class="mb" style="top:62.500px"></div><div class="mb" style="top:98.500px"></div><div class="ftrk"></div><div class="fcap"></div><div class="meter"></div><div class="dash"></div><div class="lbl" style="background:#f5d43c"></div></div>
<div class="t" style="left:1714.50px;top:880.00px;font-size:12px;color:#69abe6;transform:scaleX(0.891);">C</div>
<div class="t" style="left:1724.80px;top:904.00px;font-size:12px;color:#67a9e6;transform:scaleX(0.985);">0.04</div>
<svg class="a" style="left:1693.35px;top:940.7px" width="11.7" height="10.4" viewBox="0 0 12 9" preserveAspectRatio="none"><path d="M0 9V2.4Q0 0 2.4 0H9.4Q12 0 12 2.6V9H8.85V2.9Q8.85 2.35 8.4 2.35H7.55V9H4.45V2.35H3.15V9Z" fill="#f2f4f6"/></svg>
<svg class="a" style="left:1693.4px;top:977.0px" width="11.4" height="10.0" viewBox="0 0 11 9" preserveAspectRatio="none"><path d="M10.7 1.35H3.3Q1.35 1.35 1.35 2.95Q1.35 4.5 3.3 4.5H7.7Q9.65 4.5 9.65 6.05Q9.65 7.65 7.7 7.65H0.3" fill="none" stroke="#f2f4f6" stroke-width="2.7"/></svg>
<div class="t" style="left:1681.47px;top:1037.00px;font-size:11.5px;color:rgba(0,0,0,.8);transform:scaleX(0.950);-webkit-text-stroke:.45px rgba(0,0,0,.8);">Glocke...Track]</div>
<div class="strip" style="left:1766px;"><div class="pan"></div><div class="val"></div><div class="mb" style="top:62.500px"></div><div class="mb" style="top:98.500px"></div><div class="ftrk"></div><div class="fcap"></div><div class="meter"></div><div class="dash"></div><div class="lbl" style="background:#b4ec3c"></div></div>
<div class="t" style="left:1802.50px;top:880.00px;font-size:12px;color:#69abe6;transform:scaleX(0.891);">C</div>
<div class="t" style="left:1812.80px;top:904.00px;font-size:12px;color:#67a9e6;transform:scaleX(0.985);">0.04</div>
<svg class="a" style="left:1781.35px;top:940.7px" width="11.7" height="10.4" viewBox="0 0 12 9" preserveAspectRatio="none"><path d="M0 9V2.4Q0 0 2.4 0H9.4Q12 0 12 2.6V9H8.85V2.9Q8.85 2.35 8.4 2.35H7.55V9H4.45V2.35H3.15V9Z" fill="#f2f4f6"/></svg>
<svg class="a" style="left:1781.4px;top:977.0px" width="11.4" height="10.0" viewBox="0 0 11 9" preserveAspectRatio="none"><path d="M10.7 1.35H3.3Q1.35 1.35 1.35 2.95Q1.35 4.5 3.3 4.5H7.7Q9.65 4.5 9.65 6.05Q9.65 7.65 7.7 7.65H0.3" fill="none" stroke="#f2f4f6" stroke-width="2.7"/></svg>
<div class="t" style="left:1780.00px;top:1037.00px;font-size:11.5px;color:rgba(0,0,0,.8);transform:scaleX(0.855);-webkit-text-stroke:.45px rgba(0,0,0,.8);">Percuss</div>
<div class="a" style="left:1786px;top:866px;width:35px;height:188px;background:linear-gradient(90deg,rgba(17,20,23,0),rgba(17,20,23,.35) 40%,#111417);"></div>
<div class="a" style="left:1821px;top:866px;width:99px;height:188px;background:#111417;"></div>
<div class="strip" style="left:1824px;background:linear-gradient(#7c3744,#6a2f3b 60%,#622b37);box-shadow:inset 0 1px 0 #8d4452"><div class="pan"></div><div class="val"></div><div class="mb" style="top:62.500px"></div><div class="mb" style="top:98.500px"></div><div class="ftrk"></div><div class="fcap" style="background:linear-gradient(#f08890 0%,#e87680 13%,#b83c48 14%,#ba3e4a 20%,#8a2630 20.5%,#8a2630 23%,#c4444e 23.5%,#cc4a54 39%,#a8323c 39.5%,#a8323c 41.5%,#d04e58 42%,#d4525c 48.5%,#5a161c 49%,#5a161c 51.5%,#de5a64 52%,#e25e68 64%,#b03a44 64.5%,#b03a44 66%,#e4606a 66.5%,#e8646e 83%,#c4464e 84%,#a2303a 100%);box-shadow:0 1px 2px rgba(0,0,0,.7),inset 1px 0 0 rgba(255,170,180,.55),inset -1px 0 0 rgba(255,170,180,.55)"></div><div class="meter"></div><div class="dash"></div><div class="lbl" style="background:#c9525f"></div></div>
<div class="t" style="left:1860.50px;top:880.00px;font-size:12px;color:#69abe6;transform:scaleX(0.891);">C</div>
<div class="t" style="left:1870.80px;top:904.00px;font-size:12px;color:#67a9e6;transform:scaleX(0.985);">0.04</div>
<svg class="a" style="left:1839.35px;top:940.7px" width="11.7" height="10.4" viewBox="0 0 12 9" preserveAspectRatio="none"><path d="M0 9V2.4Q0 0 2.4 0H9.4Q12 0 12 2.6V9H8.85V2.9Q8.85 2.35 8.4 2.35H7.55V9H4.45V2.35H3.15V9Z" fill="#f2f4f6"/></svg>
<svg class="a" style="left:1839.4px;top:977.0px" width="11.4" height="10.0" viewBox="0 0 11 9" preserveAspectRatio="none"><path d="M10.7 1.35H3.3Q1.35 1.35 1.35 2.95Q1.35 4.5 3.3 4.5H7.7Q9.65 4.5 9.65 6.05Q9.65 7.65 7.7 7.65H0.3" fill="none" stroke="#f2f4f6" stroke-width="2.7"/></svg>
<div class="t" style="left:1847.60px;top:1037.00px;font-size:11.5px;color:rgba(0,0,0,.8);transform:scaleX(0.951);-webkit-text-stroke:.45px rgba(0,0,0,.8);">Output</div>
<div class="a" style="left:0px;top:1054px;width:1920px;height:26px;background:#14171a;"></div>
<div class="a" style="left:0px;top:1055px;width:1010px;height:25px;background:#1d2126;"></div>
<div class="a" style="left:1012px;top:1055px;width:744px;height:25px;background:#191c20;"></div>
<div class="a" style="left:4px;top:1056px;width:40px;height:22px;background:#2a333d;border-radius:4px;"></div>
<svg class="a" style="left:11px;top:1058px" width="10" height="18" viewBox="0 0 10 18" ><ellipse cx="3.700" cy="14" rx="3.200" ry="2.400" fill="none" stroke="#cfd5da" stroke-width="1.200" transform="rotate(-20 3.700 14)"/><path d="M6.700 13.500V1.500" stroke="#cfd5da" stroke-width="1.200"/></svg>
<svg class="a" style="left:28px;top:1064.5px" width="8" height="4.5" viewBox="0 0 8 4.5" ><path d="M0.65 0.65L4.0 3.85L7.35 0.65" fill="none" stroke="#cfd5da" stroke-width="1.3" stroke-linecap="round" stroke-linejoin="round"/></svg>
<div class="a" style="left:50px;top:1056px;width:371px;height:22px;background:#2a333d;border-radius:4px;"></div>
<div class="a" style="left:50px;top:1056px;width:167px;height:22px;background:#2a6593;border-radius:4px;"></div>
<div class="t" style="left:58.50px;top:1062.00px;font-size:12px;color:#fff;transform:scaleX(0.997);-webkit-text-stroke:.2px #fff;">Реальная высота звучания</div>
<div class="t" style="left:226.50px;top:1062.00px;font-size:12px;color:#e3e7ea;transform:scaleX(1.011);">Транспонированная высота тона</div>
<div class="t" style="left:432.00px;top:1062.00px;font-size:12px;color:#cfd5da;transform:scaleX(0.974);">Страница 2 of 13</div>
<div class="t" style="left:541.00px;top:1062.00px;font-size:12px;color:#cfd5da;transform:scaleX(0.960);">Такт 6</div>
<div class="t" style="left:627.00px;top:1062.00px;font-size:12px;color:#cfd5da;transform:scaleX(0.941);">00:00:15–00:00:15 (0.1")</div>
<div class="t" style="left:768.00px;top:1062.00px;font-size:12px;color:#cfd5da;transform:scaleX(0.984);">Нота: D5 [74] (1-й голос со штилями вверх)</div>
<div class="a" style="left:1758px;top:1055px;width:162px;height:25px;background:#1d2126;"></div>
<div class="a" style="left:1762px;top:1062px;width:21px;height:10px;background:#39434d;border-radius:5px;"></div>
<div class="a" style="left:1771px;top:1061px;width:12px;height:12px;background:#3fa9f5;border-radius:6px;"></div>
<div class="t" style="left:1801.00px;top:1062.00px;font-size:12px;color:#e3e7ea;transform:scaleX(0.986);">Follow playhead</div>
<svg class="a" style="left:1375.5px;top:1063px" width="17" height="8" viewBox="0 0 17 8" ><path d="M1.500 1.600Q8.500 7.600 15.500 1.600" fill="none" stroke="#f4f6f8" stroke-width="2.300" stroke-linecap="round"/></svg>
</body></html>
